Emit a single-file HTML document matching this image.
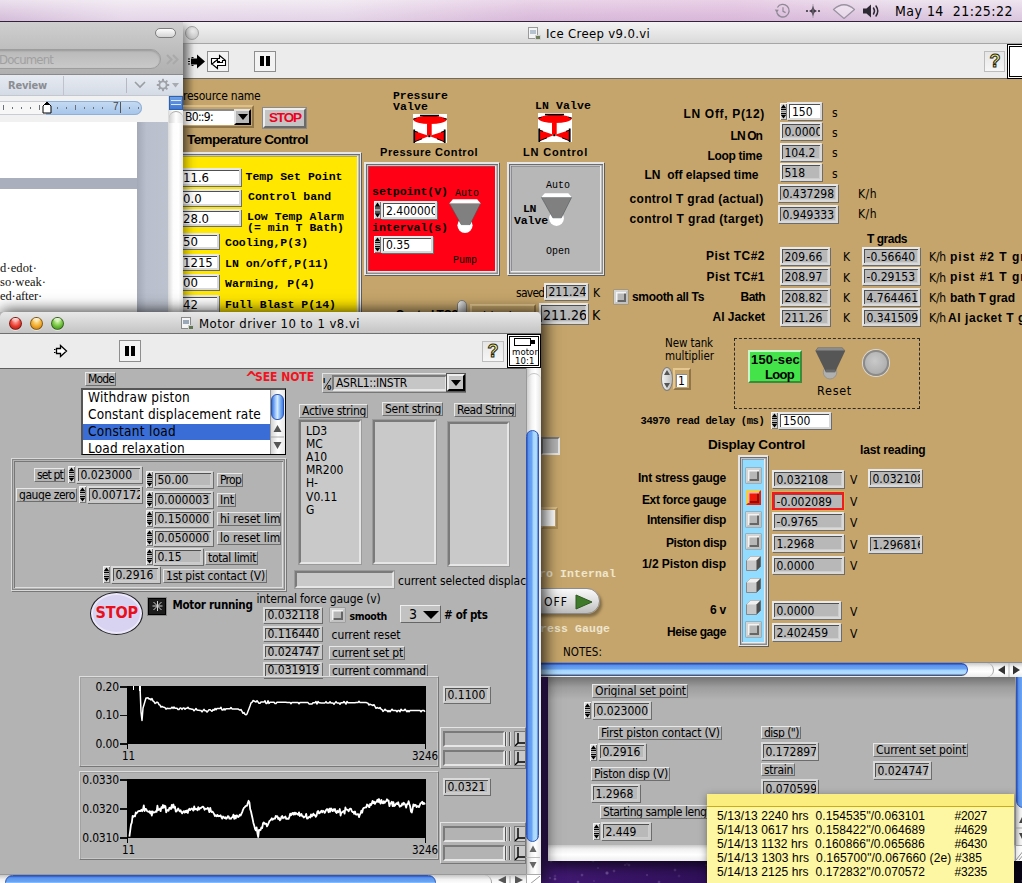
<!DOCTYPE html>
<html lang="en"><head><meta charset="utf-8"><title>Ice Creep v9.0.vi</title>
<style>
html,body{margin:0;padding:0}
body{width:1022px;height:883px;overflow:hidden;position:relative;background:#2c1445;font-family:"DejaVu Sans Condensed","Liberation Sans","DejaVu Sans",sans-serif;font-size:12px;color:#000}
*{box-sizing:border-box}
.a{position:absolute}
.t{position:absolute;white-space:pre;line-height:1}
.lg{font-family:"DejaVu Sans Condensed","Liberation Sans","DejaVu Sans",sans-serif}
.ar{font-family:"Liberation Sans",sans-serif}
.mono{font-family:"DejaVu Sans Mono","Liberation Mono",monospace;font-weight:bold}
.b{font-weight:bold}
/* desktop */
#desk{left:0;top:0;width:1022px;height:883px;background:radial-gradient(circle at 706px 865px,rgba(220,200,255,0.18) 0,rgba(220,200,255,0) 1.6px),radial-gradient(circle at 728px 879px,rgba(220,200,255,0.16) 0,rgba(220,200,255,0) 2.2px),radial-gradient(circle at 755px 863px,rgba(220,200,255,0.34) 0,rgba(220,200,255,0) 1.6px),radial-gradient(circle at 964px 879px,rgba(220,200,255,0.37) 0,rgba(220,200,255,0) 1.6px),radial-gradient(circle at 836px 879px,rgba(220,200,255,0.49) 0,rgba(220,200,255,0) 1.6px),radial-gradient(circle at 826px 870px,rgba(220,200,255,0.20) 0,rgba(220,200,255,0) 1.6px),radial-gradient(circle at 833px 870px,rgba(220,200,255,0.19) 0,rgba(220,200,255,0) 1.8px),radial-gradient(circle at 731px 864px,rgba(220,200,255,0.35) 0,rgba(220,200,255,0) 1.8px),radial-gradient(circle at 795px 878px,rgba(220,200,255,0.42) 0,rgba(220,200,255,0) 2.2px),radial-gradient(circle at 840px 872px,rgba(220,200,255,0.24) 0,rgba(220,200,255,0) 1.8px),radial-gradient(circle at 898px 863px,rgba(220,200,255,0.33) 0,rgba(220,200,255,0) 1.8px),radial-gradient(circle at 914px 875px,rgba(220,200,255,0.19) 0,rgba(220,200,255,0) 2.2px),radial-gradient(circle at 625px 865px,rgba(220,200,255,0.30) 0,rgba(220,200,255,0) 1.6px),radial-gradient(circle at 932px 879px,rgba(220,200,255,0.27) 0,rgba(220,200,255,0) 1.8px),radial-gradient(circle at 845px 879px,rgba(220,200,255,0.17) 0,rgba(220,200,255,0) 1.6px),radial-gradient(circle at 679px 876px,rgba(220,200,255,0.17) 0,rgba(220,200,255,0) 1.8px),radial-gradient(circle at 872px 882px,rgba(220,200,255,0.25) 0,rgba(220,200,255,0) 2.2px),radial-gradient(circle at 995px 882px,rgba(220,200,255,0.48) 0,rgba(220,200,255,0) 1.8px),radial-gradient(circle at 627px 864px,rgba(220,200,255,0.17) 0,rgba(220,200,255,0) 1.8px),radial-gradient(circle at 607px 873px,rgba(220,200,255,0.47) 0,rgba(220,200,255,0) 2.2px),radial-gradient(circle at 582px 875px,rgba(220,200,255,0.34) 0,rgba(220,200,255,0) 1.8px),radial-gradient(circle at 960px 878px,rgba(220,200,255,0.40) 0,rgba(220,200,255,0) 1.8px),radial-gradient(circle at 890px 873px,rgba(220,200,255,0.18) 0,rgba(220,200,255,0) 1.8px),radial-gradient(circle at 659px 882px,rgba(220,200,255,0.32) 0,rgba(220,200,255,0) 1.8px),radial-gradient(circle at 675px 870px,rgba(220,200,255,0.30) 0,rgba(220,200,255,0) 1.8px),radial-gradient(circle at 853px 879px,rgba(220,200,255,0.39) 0,rgba(220,200,255,0) 1.6px),radial-gradient(circle at 774px 878px,rgba(220,200,255,0.29) 0,rgba(220,200,255,0) 2.2px),radial-gradient(circle at 594px 881px,rgba(220,200,255,0.17) 0,rgba(220,200,255,0) 1.6px),radial-gradient(circle at 647px 875px,rgba(220,200,255,0.27) 0,rgba(220,200,255,0) 1.6px),radial-gradient(circle at 593px 861px,rgba(220,200,255,0.34) 0,rgba(220,200,255,0) 1.8px),radial-gradient(circle at 855px 861px,rgba(220,200,255,0.36) 0,rgba(220,200,255,0) 1.8px),radial-gradient(circle at 865px 872px,rgba(220,200,255,0.32) 0,rgba(220,200,255,0) 1.6px),radial-gradient(circle at 975px 875px,rgba(220,200,255,0.32) 0,rgba(220,200,255,0) 1.6px),radial-gradient(circle at 614px 871px,rgba(220,200,255,0.32) 0,rgba(220,200,255,0) 1.8px),radial-gradient(circle at 805px 867px,rgba(220,200,255,0.20) 0,rgba(220,200,255,0) 1.6px),radial-gradient(circle at 929px 877px,rgba(220,200,255,0.39) 0,rgba(220,200,255,0) 1.8px),radial-gradient(circle at 806px 866px,rgba(220,200,255,0.42) 0,rgba(220,200,255,0) 1.8px),radial-gradient(circle at 866px 868px,rgba(220,200,255,0.43) 0,rgba(220,200,255,0) 2.2px),radial-gradient(circle at 919px 867px,rgba(220,200,255,0.27) 0,rgba(220,200,255,0) 1.6px),radial-gradient(circle at 555px 876px,rgba(220,200,255,0.22) 0,rgba(220,200,255,0) 1.8px),radial-gradient(circle at 769px 872px,rgba(220,200,255,0.23) 0,rgba(220,200,255,0) 1.8px),radial-gradient(circle at 781px 867px,rgba(220,200,255,0.32) 0,rgba(220,200,255,0) 1.6px),radial-gradient(circle at 786px 881px,rgba(220,200,255,0.44) 0,rgba(220,200,255,0) 1.6px),radial-gradient(circle at 1006px 873px,rgba(220,200,255,0.32) 0,rgba(220,200,255,0) 1.8px),radial-gradient(circle at 763px 881px,rgba(220,200,255,0.43) 0,rgba(220,200,255,0) 2.2px),radial-gradient(circle at 778px 873px,rgba(220,200,255,0.21) 0,rgba(220,200,255,0) 1.8px),radial-gradient(circle at 555px 879px,rgba(220,200,255,0.43) 0,rgba(220,200,255,0) 1.8px),radial-gradient(circle at 854px 876px,rgba(220,200,255,0.20) 0,rgba(220,200,255,0) 1.8px),radial-gradient(circle at 551px 861px,rgba(220,200,255,0.33) 0,rgba(220,200,255,0) 1.8px),radial-gradient(circle at 763px 867px,rgba(220,200,255,0.24) 0,rgba(220,200,255,0) 1.8px),radial-gradient(circle at 797px 879px,rgba(220,200,255,0.24) 0,rgba(220,200,255,0) 2.2px),radial-gradient(circle at 968px 862px,rgba(220,200,255,0.46) 0,rgba(220,200,255,0) 2.2px),radial-gradient(circle at 964px 877px,rgba(220,200,255,0.33) 0,rgba(220,200,255,0) 1.6px),radial-gradient(circle at 987px 875px,rgba(220,200,255,0.42) 0,rgba(220,200,255,0) 1.8px),radial-gradient(circle at 629px 865px,rgba(220,200,255,0.34) 0,rgba(220,200,255,0) 1.8px),radial-gradient(circle at 890px 877px,rgba(220,200,255,0.42) 0,rgba(220,200,255,0) 1.6px),radial-gradient(circle at 993px 878px,rgba(220,200,255,0.22) 0,rgba(220,200,255,0) 1.6px),radial-gradient(circle at 936px 877px,rgba(220,200,255,0.35) 0,rgba(220,200,255,0) 1.6px),radial-gradient(circle at 767px 871px,rgba(220,200,255,0.39) 0,rgba(220,200,255,0) 2.2px),radial-gradient(circle at 801px 878px,rgba(220,200,255,0.39) 0,rgba(220,200,255,0) 1.8px),radial-gradient(circle at 1013px 867px,rgba(220,200,255,0.20) 0,rgba(220,200,255,0) 1.6px),radial-gradient(circle at 741px 875px,rgba(220,200,255,0.38) 0,rgba(220,200,255,0) 2.2px),radial-gradient(circle at 578px 882px,rgba(220,200,255,0.42) 0,rgba(220,200,255,0) 1.8px),radial-gradient(circle at 1022px 881px,rgba(220,200,255,0.20) 0,rgba(220,200,255,0) 1.8px),radial-gradient(circle at 780px 864px,rgba(220,200,255,0.46) 0,rgba(220,200,255,0) 1.8px),radial-gradient(circle at 882px 866px,rgba(220,200,255,0.50) 0,rgba(220,200,255,0) 2.2px),radial-gradient(circle at 714px 867px,rgba(220,200,255,0.26) 0,rgba(220,200,255,0) 1.8px),radial-gradient(circle at 550px 878px,rgba(220,200,255,0.30) 0,rgba(220,200,255,0) 1.6px),radial-gradient(circle at 737px 877px,rgba(220,200,255,0.33) 0,rgba(220,200,255,0) 1.6px),radial-gradient(circle at 598px 868px,rgba(220,200,255,0.24) 0,rgba(220,200,255,0) 1.6px),linear-gradient(90deg,#46207a 0%,#46207a 52.9%,#411a72 53.6%,#3a1568 60%,#2f1058 70%,#200b40 82%,#120828 93%,#0a0616 100%)}
/* menubar */
#menubar{left:0;top:0;width:1022px;height:22px;background:linear-gradient(90deg,rgba(255,255,255,0) 0,rgba(255,255,255,.38) 12%,rgba(255,255,255,.34) 33%,rgba(228,170,216,.22) 52%,rgba(228,170,216,.3) 72%,rgba(255,255,255,.08) 88%,rgba(255,255,255,.15) 100%),linear-gradient(180deg,#ebe1ed 0%,#e1cfe4 45%,#d4bcd9 100%);border-bottom:1px solid #33223a}
/* generic window */
.win{position:absolute;overflow:hidden}
.titlebar{position:absolute;left:0;top:0;right:0;height:22px;background:linear-gradient(180deg,#ebebeb 0%,#d8d8d8 100%);border-bottom:1px solid #a0a0a0}
.toolbar{position:absolute;left:0;right:0;background:#ececec}
/* LabVIEW widgets */
.ind{position:absolute;background:#b8b8b8;border:2px solid;border-color:#e9e9e9 #d9d9d9 #d9d9d9 #e9e9e9;box-shadow:inset 1px 1px 0 #505050,inset -1px -1px 0 #cdcdcd,1px 1px 0 #6c6c6c;font-size:12px;line-height:1;padding:2px 0 0 2.5px;white-space:pre;overflow:hidden}
.ctl{position:absolute;background:#fff;border:2px solid;border-color:#e9e9e9 #d9d9d9 #d9d9d9 #e9e9e9;box-shadow:inset 1px 1px 0 #505050,1px 1px 0 #6c6c6c;font-size:12px;line-height:1;padding:2px 0 0 3px;white-space:pre;overflow:hidden}
.cap{position:absolute;background:#b4b4b4;border:1px solid;border-color:#e8e8e8 #6e6e6e #6e6e6e #e8e8e8;font-size:12px;line-height:1;padding:1px 2px 0 2px;white-space:pre;overflow:hidden}
.spin{position:absolute;width:7px;height:17px}
.mb{font-family:"Liberation Mono","DejaVu Sans Mono",monospace;font-weight:bold;font-size:11.5px;position:absolute;white-space:pre;line-height:1}
.mr{font-family:"Liberation Mono","DejaVu Sans Mono",monospace;font-size:10px;position:absolute;white-space:pre;line-height:1}
.gb{font-family:"Liberation Sans","DejaVu Sans",sans-serif;font-weight:bold;font-size:11.5px;position:absolute;white-space:pre;line-height:1;letter-spacing:.6px}
.lb{font-family:"Liberation Sans",sans-serif;font-weight:bold;position:absolute;white-space:pre;line-height:1}
.frame{position:absolute;border:1px solid #d9d9d9;box-shadow:inset 1px 1px 0 #868686,inset -1px -1px 0 #868686,inset 2px 2px 0 #b3b3b3,inset -2px -2px 0 #b3b3b3,inset 3px 3px 0 #777,inset -3px -3px 0 #dedede,1px 1px 0 #777}
.cframe{position:absolute;border:1px solid;border-color:#dedede #777 #777 #dedede;box-shadow:inset 1px 1px 0 #a2a2a2,inset -1px -1px 0 #c8c8c8}
.chk{position:absolute;background:#b7b7b7;border:2px solid;border-color:#d4d4d4 #c2c2c2 #c2c2c2 #d4d4d4;box-shadow:inset 1.5px 1.5px 0 #f4f4f4,inset -2px -2px 0 #666,0 0 0 .5px #8a8a8a}
.gframe{position:absolute;border:solid #e6e6e6;border-width:2px 1px 1px 2px;box-shadow:inset 1px 1px 0 #6c6c6c,inset -1.5px -1.5px 0 #8c8c8c,inset 2px 2px 0 #c4c4c8,inset -3px -3px 0 #ececec,inset 2.6px 2.6px 0 #70707a,1px 1px 0 #5e5e5e}
#motor .ind,#lower .ind{border-color:#dadada #cacaca #cacaca #dadada;background:#b9b9b9}

</style></head>
<body>
<div id="desk" class="a"></div>
<div id="lower" class="win" style="left:548px;top:600px;width:474px;height:261px;background:#b3b3b3;overflow:visible;box-shadow:0 5px 12px rgba(0,0,0,.7)">
<div class="a" style="left:0px;top:77px;width:474px;height:23px;background:linear-gradient(180deg,rgba(0,0,0,.36),rgba(0,0,0,.12) 45%,rgba(0,0,0,0))"></div>
<div class="cap" style="left:44px;top:84px;width:96px;height:14px;padding:0"><div class="t" style="left:2px;top:0px;font-size:12px;font-family:'DejaVu Sans Condensed','Liberation Sans','DejaVu Sans',sans-serif;letter-spacing:-0.12px;">Original set point</div></div>
<svg class="spin" style="left:36px;top:102px;height:17px" viewBox="0 0 7 17"><rect x="0" y="0" width="7" height="17" fill="#d6d6d6"/><path d="M0 8.5 H7 M6.5 0 V17 M0 16.5 H7" stroke="#777" stroke-width="1" fill="none"/><path d="M0.5 17 V0.5 H7" stroke="#f4f4f4" stroke-width="1" fill="none"/><path d="M3.5 1.5 L6.3 5.3 L0.7 5.3 Z" fill="#000"/><rect x="1" y="5.9" width="5" height="1.2" fill="#000"/><path d="M3.5 15.5 L6.3 11.7 L0.7 11.7 Z" fill="#000"/><rect x="1" y="9.9" width="5" height="1.2" fill="#000"/></svg>
<div class="ind" style="left:44px;top:101px;width:59px;height:18px;padding-top:2px;">0.023000</div>
<div class="cap" style="left:50px;top:126px;width:124px;height:14px;padding:0"><div class="t" style="left:2px;top:0px;font-size:12px;font-family:'DejaVu Sans Condensed','Liberation Sans','DejaVu Sans',sans-serif;letter-spacing:-0.14px;">First piston contact (V)</div></div>
<svg class="spin" style="left:42px;top:144px;height:17px" viewBox="0 0 7 17"><rect x="0" y="0" width="7" height="17" fill="#d6d6d6"/><path d="M0 8.5 H7 M6.5 0 V17 M0 16.5 H7" stroke="#777" stroke-width="1" fill="none"/><path d="M0.5 17 V0.5 H7" stroke="#f4f4f4" stroke-width="1" fill="none"/><path d="M3.5 1.5 L6.3 5.3 L0.7 5.3 Z" fill="#000"/><rect x="1" y="5.9" width="5" height="1.2" fill="#000"/><path d="M3.5 15.5 L6.3 11.7 L0.7 11.7 Z" fill="#000"/><rect x="1" y="9.9" width="5" height="1.2" fill="#000"/></svg>
<div class="ind" style="left:50px;top:143px;width:48px;height:17px;padding-top:1px;">0.2916</div>
<div class="cap" style="left:43px;top:167px;width:79px;height:14px;padding:0"><div class="t" style="left:2px;top:0px;font-size:12px;font-family:'DejaVu Sans Condensed','Liberation Sans','DejaVu Sans',sans-serif;letter-spacing:-0.24px;">Piston disp (V)</div></div>
<div class="ind" style="left:43px;top:184px;width:49px;height:18px;padding-top:2px;">1.2968</div>
<div class="cap" style="left:52px;top:205px;width:140px;height:14px;padding:0"><div class="t" style="left:2px;top:0px;font-size:12px;font-family:'DejaVu Sans Condensed','Liberation Sans','DejaVu Sans',sans-serif;letter-spacing:-0.45px">Starting sample length (in)</div></div>
<svg class="spin" style="left:45px;top:223px;height:17px" viewBox="0 0 7 17"><rect x="0" y="0" width="7" height="17" fill="#d6d6d6"/><path d="M0 8.5 H7 M6.5 0 V17 M0 16.5 H7" stroke="#777" stroke-width="1" fill="none"/><path d="M0.5 17 V0.5 H7" stroke="#f4f4f4" stroke-width="1" fill="none"/><path d="M3.5 1.5 L6.3 5.3 L0.7 5.3 Z" fill="#000"/><rect x="1" y="5.9" width="5" height="1.2" fill="#000"/><path d="M3.5 15.5 L6.3 11.7 L0.7 11.7 Z" fill="#000"/><rect x="1" y="9.9" width="5" height="1.2" fill="#000"/></svg>
<div class="ind" style="left:53px;top:222px;width:50px;height:18px;padding-top:2px;">2.449</div>
<div class="cap" style="left:213px;top:126px;width:40px;height:13px;padding:0"><div class="t" style="left:2px;top:-0.5px;font-size:12px;font-family:'DejaVu Sans Condensed','Liberation Sans','DejaVu Sans',sans-serif;letter-spacing:-0.52px;">disp (")</div></div>
<div class="ind" style="left:213px;top:142px;width:57px;height:18px;padding-top:2px;">0.172897</div>
<div class="cap" style="left:213px;top:163px;width:34px;height:13px;padding:0"><div class="t" style="left:2px;top:-0.5px;font-size:12px;font-family:'DejaVu Sans Condensed','Liberation Sans','DejaVu Sans',sans-serif;letter-spacing:-0.29px;">strain</div></div>
<div class="ind" style="left:213px;top:179px;width:57px;height:18px;padding-top:2px;">0.070599</div>
<div class="cap" style="left:325px;top:143px;width:95px;height:14px;padding:0"><div class="t" style="left:2px;top:0px;font-size:12px;font-family:'DejaVu Sans Condensed','Liberation Sans','DejaVu Sans',sans-serif;letter-spacing:-0.08px;">Current set point</div></div>
<div class="ind" style="left:325px;top:161px;width:58px;height:18px;padding-top:2px;">0.024747</div>
<div class="a" style="left:0px;top:245px;width:467px;height:16px;background:linear-gradient(180deg,#c9c9c9 0%,#f0f0f0 25%,#fff 60%,#eee 100%)"></div>
<div class="a" style="left:467px;top:77px;width:15px;height:184px;background:linear-gradient(90deg,#c6c6c6,#f2f2f2 30%,#fff 60%,#e6e6e6);border-left:1px solid #999"></div>
<div class="a" style="left:468px;top:70px;width:14px;height:138px;border-radius:7px;background:linear-gradient(90deg,#2f55c4 0%,#5b93ec 14%,#6aa6f4 45%,#a4d4ff 56%,#b5e0ff 85%,#4a7fe0 100%);border:1px solid #2c55b4"></div>
<svg class="a" style="left:468px;top:212px" width="14" height="32"><path d="M7 3 L11 11 L3 11Z M7 29 L11 21 L3 21Z" fill="#444"/><rect x="0" y="15.5" width="14" height="1" fill="#aaa"/></svg>
<div class="a" style="left:467px;top:245px;width:15px;height:16px;background:#fff;border-left:1px solid #aaa;border-top:1px solid #aaa"></div>
<svg class="a" style="left:468px;top:248px" width="8" height="12"><path d="M0 12 L8 2 M3 12 L8 6" stroke="#999" stroke-width="1"/></svg>
</div>
<div id="ice" class="win" style="left:183px;top:22px;width:839px;height:655px;background:#c5a56b">
<div class="titlebar" style="background:linear-gradient(180deg,#f3f3f3 0%,#e7e7e7 50%,#dadada 100%);border-bottom:1px solid #a6a6a6"></div>
<div class="a" style="left:2px;top:4px;width:14px;height:14px;border-radius:50%;background:radial-gradient(circle at 50% 35%,#f4f4f4,#cfcfcf 70%,#b5b5b5);border:1px solid #a4a4a4"></div>
<div class="a" style="left:345px;top:5px;width:10px;height:12px;background:#f4f4f4;border:1px solid #9a9a9a"></div>
<div class="a" style="left:347px;top:8px;width:6px;height:4px;background:#b7c2cf"></div>
<div class="a" style="left:352px;top:13px;width:6px;height:5px;background:#6e7f5a;border:1px solid #d0d0d0"></div>
<div class="t" style="left:363px;top:4.5px;font-size:13px;font-family:'DejaVu Sans Condensed','Liberation Sans','DejaVu Sans',sans-serif;letter-spacing:0.33px;">Ice Creep v9.0.vi</div>
<div class="toolbar" style="top:22px;height:35px;border-bottom:1px solid #6b6b6b;background:#ececec"></div>
<svg class="a" style="left:5px;top:32px" width="18" height="15" viewBox="0 0 18 15"><path d="M3 4.5 L9 4.5 L9 0.5 L17 7.5 L9 14.5 L9 10.5 L3 10.5 Z" fill="#000"/><path d="M0 5 h2 M0 7.5 h2 M0 10 h2 M3.5 3.5 h2 M3.5 11.5 h2" stroke="#000" stroke-width="1.2"/></svg>
<div class="a" style="left:24px;top:29px;width:22px;height:21px;background:#f3f3f3;border:1px solid #8e8e8e"></div>
<svg class="a" style="left:26px;top:32px" width="19" height="16" viewBox="0 0 19 16"><path d="M2.5 10 L2.5 4.5 L10.5 4.5 L10.5 1.5 L16 6 L10.5 10.5 L10.5 7.5 L5.5 7.5 L5.5 10 Z" fill="#fff" stroke="#000" stroke-width="1.1"/><path d="M16.5 6.5 L16.5 11.5 L8.5 11.5 L8.5 14.5 L3 10 L8.5 5.5 L8.5 8.5 L13.5 8.5 L13.5 6.5 Z" fill="#fff" stroke="#000" stroke-width="1.1"/></svg>
<div class="a" style="left:71px;top:29px;width:22px;height:21px;background:#f3f3f3;border:1px solid #8e8e8e"></div>
<div class="a" style="left:77px;top:34px;width:4px;height:10px;background:#000"></div>
<div class="a" style="left:83px;top:34px;width:4px;height:10px;background:#000"></div>
<div class="a" style="left:801px;top:29px;width:21px;height:21px;background:linear-gradient(180deg,#e6e6e6,#f6f6f6);border:1px solid #bdbdbd"></div>
<div class="t" style="left:806.5px;top:30px;font-size:18px;font-family:'Liberation Sans',sans-serif;font-weight:bold;letter-spacing:0.00px;color:#f4ee6a;-webkit-text-stroke:1px #222">?</div>
<div class="a" style="left:824px;top:22px;width:34px;height:35px;background:#fff;border:1px solid #000;box-shadow:inset 0 0 0 1px #fff,inset 0 0 0 2px #000"></div>
<div class="a" style="left:0px;top:22px;width:11px;height:276px;background:linear-gradient(90deg,rgba(0,0,0,.28),rgba(0,0,0,0))"></div>
<div class="t" style="left:0px;top:67.5px;font-size:12px;font-family:'DejaVu Sans Condensed','Liberation Sans','DejaVu Sans',sans-serif;letter-spacing:-0.25px;">resource name</div>
<div class="a" style="left:-8px;top:83px;width:79px;height:23px;background:#c5a56b;border:2px solid;border-color:#dcc08c #8f7547 #8f7547 #dcc08c"></div>
<div class="a" style="left:-8px;top:87px;width:59px;height:16px;background:#fff;border-top:2px solid #8a8a8a"></div>
<div class="t" style="left:2px;top:89px;font-size:12px;font-family:'DejaVu Sans Condensed','Liberation Sans','DejaVu Sans',sans-serif;letter-spacing:-0.68px;">B0::9:</div>
<div class="a" style="left:51px;top:87px;width:17px;height:16px;background:#b8b8b8;border:2px solid;border-color:#e4e4e4 #000 #000 #e4e4e4"></div>
<svg class="a" style="left:55px;top:92px" width="10" height="6"><path d="M0 0 L10 0 L5 6 Z" fill="#000"/></svg>
<div class="a" style="left:80px;top:86px;width:43px;height:20px;background:#c4c4c4;border:2px solid;border-color:#eee #6a6a6a #6a6a6a #eee;outline:1px solid #8a8a8a"></div>
<div class="t" style="left:86px;top:89.25px;font-size:13.5px;font-family:'Liberation Sans',sans-serif;font-weight:bold;letter-spacing:-1.13px;color:#f0001c">STOP</div>
<div class="t" style="left:4px;top:111.25px;font-size:13.5px;font-family:'Liberation Sans',sans-serif;font-weight:bold;letter-spacing:-0.61px;">Temperature Control</div>
<div class="gframe" style="left:-13px;top:130px;width:191px;height:178px;background:#ffe700"></div>
<div class="ctl" style="left:-13px;top:146px;width:71px;height:18px;padding-top:2px;border-width:2px"></div>
<div class="t" style="left:0px;top:149px;font-size:13px;font-family:'DejaVu Sans Condensed','Liberation Sans','DejaVu Sans',sans-serif;letter-spacing:0.00px;">11.6</div>
<div class="t" style="right:838.5px;top:149px;font-size:13px;font-family:'DejaVu Sans Condensed','Liberation Sans','DejaVu Sans',sans-serif;letter-spacing:0px;">2</div>
<div class="t" style="left:62.5px;top:149.25px;font-size:11.5px;font-family:'Liberation Mono','DejaVu Sans Mono',monospace;font-weight:bold;letter-spacing:0.03px;">Temp Set Point</div>
<div class="ctl" style="left:-13px;top:167px;width:71px;height:17px;padding-top:1px;border-width:2px"></div>
<div class="t" style="left:0px;top:169.5px;font-size:13px;font-family:'DejaVu Sans Condensed','Liberation Sans','DejaVu Sans',sans-serif;letter-spacing:0.00px;">0.0</div>
<div class="t" style="right:838.5px;top:169.5px;font-size:13px;font-family:'DejaVu Sans Condensed','Liberation Sans','DejaVu Sans',sans-serif;letter-spacing:0px;">0</div>
<div class="t" style="left:65px;top:169.25px;font-size:11.5px;font-family:'Liberation Mono','DejaVu Sans Mono',monospace;font-weight:bold;letter-spacing:0.02px;">Control band</div>
<div class="ctl" style="left:-13px;top:187px;width:71px;height:17px;padding-top:1px;border-width:2px"></div>
<div class="t" style="left:0px;top:189.5px;font-size:13px;font-family:'DejaVu Sans Condensed','Liberation Sans','DejaVu Sans',sans-serif;letter-spacing:0.00px;">28.0</div>
<div class="t" style="right:838.5px;top:189.5px;font-size:13px;font-family:'DejaVu Sans Condensed','Liberation Sans','DejaVu Sans',sans-serif;letter-spacing:0px;">1</div>
<div class="t" style="left:64px;top:189.25px;font-size:11.5px;font-family:'Liberation Mono','DejaVu Sans Mono',monospace;font-weight:bold;letter-spacing:0.03px;">Low Temp Alarm</div>
<div class="ctl" style="left:-13px;top:211px;width:49px;height:16px;padding-top:0px;border-width:2px"></div>
<div class="t" style="left:0px;top:213px;font-size:13px;font-family:'DejaVu Sans Condensed','Liberation Sans','DejaVu Sans',sans-serif;letter-spacing:0.00px;">50</div>
<div class="t" style="right:838.5px;top:213px;font-size:13px;font-family:'DejaVu Sans Condensed','Liberation Sans','DejaVu Sans',sans-serif;letter-spacing:0px;">1</div>
<div class="t" style="left:42px;top:214.75px;font-size:11.5px;font-family:'Liberation Mono','DejaVu Sans Mono',monospace;font-weight:bold;letter-spacing:0.02px;">Cooling,P(3)</div>
<div class="ctl" style="left:-13px;top:232px;width:49px;height:16px;padding-top:0px;border-width:2px"></div>
<div class="t" style="left:0px;top:234px;font-size:13px;font-family:'DejaVu Sans Condensed','Liberation Sans','DejaVu Sans',sans-serif;letter-spacing:0.00px;">1215</div>
<div class="t" style="right:838.5px;top:234px;font-size:13px;font-family:'DejaVu Sans Condensed','Liberation Sans','DejaVu Sans',sans-serif;letter-spacing:0px;">1</div>
<div class="t" style="left:42px;top:235.75px;font-size:11.5px;font-family:'Liberation Mono','DejaVu Sans Mono',monospace;font-weight:bold;letter-spacing:0.03px;">LN on/off,P(11)</div>
<div class="ctl" style="left:-13px;top:252px;width:49px;height:16px;padding-top:0px;border-width:2px"></div>
<div class="t" style="left:0px;top:254px;font-size:13px;font-family:'DejaVu Sans Condensed','Liberation Sans','DejaVu Sans',sans-serif;letter-spacing:0.00px;">00</div>
<div class="t" style="right:838.5px;top:254px;font-size:13px;font-family:'DejaVu Sans Condensed','Liberation Sans','DejaVu Sans',sans-serif;letter-spacing:0px;">1</div>
<div class="t" style="left:42px;top:256.25px;font-size:11.5px;font-family:'Liberation Mono','DejaVu Sans Mono',monospace;font-weight:bold;letter-spacing:0.02px;">Warming, P(4)</div>
<div class="ctl" style="left:-13px;top:273px;width:49px;height:17px;padding-top:1px;border-width:2px"></div>
<div class="t" style="left:0px;top:275.5px;font-size:13px;font-family:'DejaVu Sans Condensed','Liberation Sans','DejaVu Sans',sans-serif;letter-spacing:0.00px;">42</div>
<div class="t" style="right:838.5px;top:275.5px;font-size:13px;font-family:'DejaVu Sans Condensed','Liberation Sans','DejaVu Sans',sans-serif;letter-spacing:0px;">1</div>
<div class="t" style="left:42px;top:277.25px;font-size:11.5px;font-family:'Liberation Mono','DejaVu Sans Mono',monospace;font-weight:bold;letter-spacing:0.04px;">Full Blast P(14)</div>
<div class="t" style="left:64px;top:199.75px;font-size:11.5px;font-family:'Liberation Mono','DejaVu Sans Mono',monospace;font-weight:bold;letter-spacing:0.03px;">(= min T Bath)</div>
<div class="t" style="left:210px;top:68.25px;font-size:11.5px;font-family:'Liberation Mono','DejaVu Sans Mono',monospace;font-weight:bold;letter-spacing:-0.03px;">Pressure</div>
<div class="t" style="left:210px;top:78.75px;font-size:11.5px;font-family:'Liberation Mono','DejaVu Sans Mono',monospace;font-weight:bold;letter-spacing:0.10px;">Valve</div>
<svg class="a" style="left:230px;top:92px" width="34" height="29" viewBox="0 0 34 29"><rect width="34" height="29" fill="#fff"/><ellipse cx="17" cy="5.8" rx="16.6" ry="4.1" fill="#ff0000"/><path d="M7 1.6 H26" stroke="#000" stroke-width="1.6"/><path d="M0 5.2 L3.5 4.2 M34 5.2 L30.5 4.2" stroke="#000" stroke-width="1"/><rect x="14" y="9.5" width="4.7" height="12" fill="#ff0000"/><path d="M2 17.3 L16.3 22 L2 27.6 Z M31 17.3 L16.3 22 L31 27.6 Z" fill="#ff0000"/><rect x="0.3" y="15.5" width="1.8" height="13.5" fill="#000"/><rect x="30.8" y="15.5" width="1.8" height="13.5" fill="#000"/><path d="M2 27.6 L9 24.8 M31 27.6 L24 24.8 M2 17.3 L5 18.3 M31 17.3 L28 18.3" stroke="#000" stroke-width="1"/><rect x="15.3" y="21.2" width="2" height="2" fill="#000"/></svg>
<div class="t" style="left:197px;top:125px;font-size:11px;font-family:'Liberation Sans',sans-serif;font-weight:bold;letter-spacing:0.55px;">Pressure Control</div>
<div class="gframe" style="left:181px;top:140px;width:135px;height:113px;background:#ff0014"></div>
<div class="t" style="left:189px;top:163.75px;font-size:11.5px;font-family:'Liberation Mono','DejaVu Sans Mono',monospace;font-weight:bold;letter-spacing:0.01px;">setpoint(V)</div>
<div class="t" style="left:272px;top:166.5px;font-size:10px;font-family:'Liberation Mono','DejaVu Sans Mono',monospace;letter-spacing:-0.00px;">Auto</div>
<svg class="spin" style="left:191px;top:179px;height:18px" viewBox="0 0 7 18"><rect x="0" y="0" width="7" height="18" fill="#d6d6d6"/><path d="M0 9.0 H7 M6.5 0 V18 M0 17.5 H7" stroke="#777" stroke-width="1" fill="none"/><path d="M0.5 18 V0.5 H7" stroke="#f4f4f4" stroke-width="1" fill="none"/><path d="M3.5 1.5 L6.3 5.8 L0.7 5.8 Z" fill="#000"/><rect x="1" y="6.4" width="5" height="1.2" fill="#000"/><path d="M3.5 16.5 L6.3 12.2 L0.7 12.2 Z" fill="#000"/><rect x="1" y="10.4" width="5" height="1.2" fill="#000"/></svg>
<div class="ctl" style="left:198px;top:179px;width:56px;height:18px;padding-top:2px;">2.400000</div>
<div class="t" style="left:189px;top:199.75px;font-size:11.5px;font-family:'Liberation Mono','DejaVu Sans Mono',monospace;font-weight:bold;letter-spacing:0.01px;">interval(s)</div>
<svg class="spin" style="left:191px;top:214px;height:17px" viewBox="0 0 7 17"><rect x="0" y="0" width="7" height="17" fill="#d6d6d6"/><path d="M0 8.5 H7 M6.5 0 V17 M0 16.5 H7" stroke="#777" stroke-width="1" fill="none"/><path d="M0.5 17 V0.5 H7" stroke="#f4f4f4" stroke-width="1" fill="none"/><path d="M3.5 1.5 L6.3 5.3 L0.7 5.3 Z" fill="#000"/><rect x="1" y="5.9" width="5" height="1.2" fill="#000"/><path d="M3.5 15.5 L6.3 11.7 L0.7 11.7 Z" fill="#000"/><rect x="1" y="9.9" width="5" height="1.2" fill="#000"/></svg>
<div class="ctl" style="left:198px;top:214px;width:52px;height:17px;padding-top:1px;">0.35</div>
<div class="t" style="left:270px;top:233.5px;font-size:10px;font-family:'Liberation Mono','DejaVu Sans Mono',monospace;letter-spacing:-0.00px;">Pump</div>
<svg class="a" style="left:266px;top:177px" width="33" height="34" viewBox="0 0 33 34"><circle cx="16" cy="26.3" r="7.6" fill="#fff"/><path d="M0.4 4.4 L31.6 4.4 L21 25.6 L12.2 25.6 Z" fill="#808080" stroke="#485656" stroke-width=".6"/><path d="M3.9 0.2 L28.1 0.2 L31.8 4.4 L0.2 4.4 Z" fill="#fff"/></svg>
<div class="t" style="left:352px;top:77.75px;font-size:11.5px;font-family:'Liberation Mono','DejaVu Sans Mono',monospace;font-weight:bold;letter-spacing:0.10px;">LN Valve</div>
<svg class="a" style="left:355px;top:91px" width="34" height="29" viewBox="0 0 34 29"><rect width="34" height="29" fill="#fff"/><ellipse cx="17" cy="5.8" rx="16.6" ry="4.1" fill="#ff0000"/><path d="M7 1.6 H26" stroke="#000" stroke-width="1.6"/><path d="M0 5.2 L3.5 4.2 M34 5.2 L30.5 4.2" stroke="#000" stroke-width="1"/><rect x="14" y="9.5" width="4.7" height="12" fill="#ff0000"/><path d="M2 17.3 L16.3 22 L2 27.6 Z M31 17.3 L16.3 22 L31 27.6 Z" fill="#ff0000"/><rect x="0.3" y="15.5" width="1.8" height="13.5" fill="#000"/><rect x="30.8" y="15.5" width="1.8" height="13.5" fill="#000"/><path d="M2 27.6 L9 24.8 M31 27.6 L24 24.8 M2 17.3 L5 18.3 M31 17.3 L28 18.3" stroke="#000" stroke-width="1"/><rect x="15.3" y="21.2" width="2" height="2" fill="#000"/></svg>
<div class="t" style="left:340px;top:124.5px;font-size:11px;font-family:'Liberation Sans',sans-serif;font-weight:bold;letter-spacing:0.82px;">LN Control</div>
<div class="gframe" style="left:324px;top:140px;width:97px;height:113px;background:#b7b7b7"></div>
<div class="t" style="left:363px;top:159px;font-size:10px;font-family:'Liberation Mono','DejaVu Sans Mono',monospace;letter-spacing:-0.00px;">Auto</div>
<svg class="a" style="left:358px;top:171px" width="32" height="33" viewBox="0 0 33 34"><circle cx="16" cy="26.3" r="7.6" fill="#fff"/><path d="M0.4 4.4 L31.6 4.4 L21 25.6 L12.2 25.6 Z" fill="#808080" stroke="#485656" stroke-width=".6"/><path d="M3.9 0.2 L28.1 0.2 L31.8 4.4 L0.2 4.4 Z" fill="#fff"/></svg>
<div class="t" style="left:340px;top:181.25px;font-size:11.5px;font-family:'Liberation Mono','DejaVu Sans Mono',monospace;font-weight:bold;letter-spacing:-0.40px;">LN</div>
<div class="t" style="left:331px;top:192.75px;font-size:11.5px;font-family:'Liberation Mono','DejaVu Sans Mono',monospace;font-weight:bold;letter-spacing:-0.10px;">Valve</div>
<div class="t" style="left:363px;top:225px;font-size:10px;font-family:'Liberation Mono','DejaVu Sans Mono',monospace;letter-spacing:-0.00px;">Open</div>
<div class="t" style="left:333px;top:264.5px;font-size:12px;font-family:'DejaVu Sans Condensed','Liberation Sans','DejaVu Sans',sans-serif;letter-spacing:-0.73px;">saved</div>
<div class="ind" style="left:361px;top:261px;width:44px;height:17px;padding-top:1px;">211.24</div>
<div class="t" style="left:410px;top:264.5px;font-size:12px;font-family:'DejaVu Sans Condensed','Liberation Sans','DejaVu Sans',sans-serif;letter-spacing:0.00px;">K</div>
<div class="ind" style="left:356px;top:281px;width:49px;height:21px;padding-top:2px;font-size:14px;padding-top:3px;padding-left:2px">211.26</div>
<div class="t" style="left:409px;top:285.5px;font-size:14px;font-family:'DejaVu Sans Condensed','Liberation Sans','DejaVu Sans',sans-serif;letter-spacing:0.00px;">K</div>
<div class="t" style="left:212.5px;top:286.5px;font-size:12px;font-family:'Liberation Sans',sans-serif;font-weight:bold;letter-spacing:-0.62px;">Control TC?</div>
<div class="a" style="left:287px;top:282px;width:66px;height:22px;background:#c5a56b;border:2px solid;border-color:#e4c890 #8f7547 #8f7547 #e4c890"></div>
<div class="t" style="left:291px;top:287.5px;font-size:14px;font-family:'DejaVu Sans Condensed','Liberation Sans','DejaVu Sans',sans-serif;letter-spacing:0.03px;">Al jacket</div>
<div class="a" style="left:274px;top:278px;width:10px;height:26px;border-radius:5px;background:linear-gradient(90deg,#f4f4f4,#b0b0b0);border:1px solid #7e7e7e"></div>
<div class="t" style="left:500.5px;top:86px;font-size:12px;font-family:'Liberation Sans',sans-serif;font-weight:bold;letter-spacing:0.68px;">LN Off, P(12)</div>
<div class="t" style="left:547.5px;top:108px;font-size:12px;font-family:'Liberation Sans',sans-serif;font-weight:bold;letter-spacing:-0.90px;">LN On</div>
<div class="t" style="left:524.5px;top:128px;font-size:12px;font-family:'Liberation Sans',sans-serif;font-weight:bold;letter-spacing:-0.31px;">Loop time</div>
<div class="t" style="left:461.5px;top:146.5px;font-size:12px;font-family:'Liberation Sans',sans-serif;font-weight:bold;letter-spacing:-0.00px;">LN  off elapsed time</div>
<div class="t" style="left:446.5px;top:170.5px;font-size:12px;font-family:'Liberation Sans',sans-serif;font-weight:bold;letter-spacing:0.32px;">control T grad (actual)</div>
<div class="t" style="left:446.5px;top:190.5px;font-size:12px;font-family:'Liberation Sans',sans-serif;font-weight:bold;letter-spacing:0.38px;">control T grad (target)</div>
<svg class="spin" style="left:597px;top:81px;height:17px" viewBox="0 0 7 17"><rect x="0" y="0" width="7" height="17" fill="#d6d6d6"/><path d="M0 8.5 H7 M6.5 0 V17 M0 16.5 H7" stroke="#777" stroke-width="1" fill="none"/><path d="M0.5 17 V0.5 H7" stroke="#f4f4f4" stroke-width="1" fill="none"/><path d="M3.5 1.5 L6.3 5.3 L0.7 5.3 Z" fill="#000"/><rect x="1" y="5.9" width="5" height="1.2" fill="#000"/><path d="M3.5 15.5 L6.3 11.7 L0.7 11.7 Z" fill="#000"/><rect x="1" y="9.9" width="5" height="1.2" fill="#000"/></svg>
<div class="ctl" style="left:604px;top:80px;width:35px;height:18px;padding-top:2px;">150</div>
<div class="ind" style="left:597px;top:100px;width:42px;height:18px;padding-top:2px;">0.0000</div>
<div class="ind" style="left:597px;top:121px;width:42px;height:18px;padding-top:2px;">104.2</div>
<div class="ind" style="left:597px;top:141px;width:42px;height:18px;padding-top:2px;">518</div>
<div class="ind" style="left:595px;top:162px;width:60px;height:18px;padding-top:2px;">0.437298</div>
<div class="ind" style="left:595px;top:183px;width:60px;height:18px;padding-top:2px;">0.949333</div>
<div class="t" style="left:649px;top:85px;font-size:12px;font-family:'DejaVu Sans Condensed','Liberation Sans','DejaVu Sans',sans-serif;letter-spacing:0.00px;">s</div>
<div class="t" style="left:649px;top:105px;font-size:12px;font-family:'DejaVu Sans Condensed','Liberation Sans','DejaVu Sans',sans-serif;letter-spacing:0.00px;">s</div>
<div class="t" style="left:649px;top:125px;font-size:12px;font-family:'DejaVu Sans Condensed','Liberation Sans','DejaVu Sans',sans-serif;letter-spacing:0.00px;">s</div>
<div class="t" style="left:649px;top:146px;font-size:12px;font-family:'DejaVu Sans Condensed','Liberation Sans','DejaVu Sans',sans-serif;letter-spacing:0.00px;">s</div>
<div class="t" style="left:675px;top:165.5px;font-size:12px;font-family:'DejaVu Sans Condensed','Liberation Sans','DejaVu Sans',sans-serif;letter-spacing:0.48px;">K/h</div>
<div class="t" style="left:675px;top:186px;font-size:12px;font-family:'DejaVu Sans Condensed','Liberation Sans','DejaVu Sans',sans-serif;letter-spacing:0.48px;">K/h</div>
<div class="t" style="left:684px;top:210.5px;font-size:12px;font-family:'Liberation Sans',sans-serif;font-weight:bold;letter-spacing:-0.48px;">T grads</div>
<div class="t" style="left:523px;top:228px;font-size:12px;font-family:'Liberation Sans',sans-serif;font-weight:bold;letter-spacing:0.48px;">Pist TC#2</div>
<div class="ind" style="left:597px;top:224.5px;width:50px;height:18.0px;padding-top:2px;">209.66</div>
<div class="t" style="left:660px;top:229px;font-size:12px;font-family:'DejaVu Sans Condensed','Liberation Sans','DejaVu Sans',sans-serif;letter-spacing:0.00px;">K</div>
<div class="ind" style="left:679px;top:224.5px;width:58px;height:18.0px;padding-top:2px;">-0.56640</div>
<div class="t" style="left:746px;top:229px;font-size:12px;font-family:'DejaVu Sans Condensed','Liberation Sans','DejaVu Sans',sans-serif;letter-spacing:-0.19px;">K/h</div>
<div class="t" style="left:767px;top:228.5px;font-size:12px;font-family:'Liberation Sans',sans-serif;font-weight:bold;letter-spacing:1.00px;">pist #2 T gr</div>
<div class="t" style="left:523.5px;top:248.5px;font-size:12px;font-family:'Liberation Sans',sans-serif;font-weight:bold;letter-spacing:0.42px;">Pist TC#1</div>
<div class="ind" style="left:597px;top:245.0px;width:50px;height:18.0px;padding-top:2px;">208.97</div>
<div class="t" style="left:660px;top:249.5px;font-size:12px;font-family:'DejaVu Sans Condensed','Liberation Sans','DejaVu Sans',sans-serif;letter-spacing:0.00px;">K</div>
<div class="ind" style="left:679px;top:245.0px;width:58px;height:18.0px;padding-top:2px;">-0.29153</div>
<div class="t" style="left:746px;top:249.5px;font-size:12px;font-family:'DejaVu Sans Condensed','Liberation Sans','DejaVu Sans',sans-serif;letter-spacing:-0.19px;">K/h</div>
<div class="t" style="left:767px;top:249px;font-size:12px;font-family:'Liberation Sans',sans-serif;font-weight:bold;letter-spacing:1.00px;">pist #1 T gr</div>
<div class="t" style="left:557.5px;top:269px;font-size:12px;font-family:'Liberation Sans',sans-serif;font-weight:bold;letter-spacing:-0.54px;">Bath</div>
<div class="ind" style="left:597px;top:265.5px;width:50px;height:18.0px;padding-top:2px;">208.82</div>
<div class="t" style="left:660px;top:270px;font-size:12px;font-family:'DejaVu Sans Condensed','Liberation Sans','DejaVu Sans',sans-serif;letter-spacing:0.00px;">K</div>
<div class="ind" style="left:679px;top:265.5px;width:58px;height:18.0px;padding-top:2px;">4.764461</div>
<div class="t" style="left:746px;top:270px;font-size:12px;font-family:'DejaVu Sans Condensed','Liberation Sans','DejaVu Sans',sans-serif;letter-spacing:-0.19px;">K/h</div>
<div class="t" style="left:767px;top:269.5px;font-size:12px;font-family:'Liberation Sans',sans-serif;font-weight:bold;letter-spacing:-0.03px;">bath T grad</div>
<div class="t" style="left:529.5px;top:289px;font-size:12px;font-family:'Liberation Sans',sans-serif;font-weight:bold;letter-spacing:-0.02px;">Al Jacket</div>
<div class="ind" style="left:597px;top:285.5px;width:50px;height:18.0px;padding-top:2px;">211.26</div>
<div class="t" style="left:660px;top:290px;font-size:12px;font-family:'DejaVu Sans Condensed','Liberation Sans','DejaVu Sans',sans-serif;letter-spacing:0.00px;">K</div>
<div class="ind" style="left:679px;top:285.5px;width:58px;height:18.0px;padding-top:2px;">0.341509</div>
<div class="t" style="left:746px;top:290px;font-size:12px;font-family:'DejaVu Sans Condensed','Liberation Sans','DejaVu Sans',sans-serif;letter-spacing:-0.19px;">K/h</div>
<div class="t" style="left:765px;top:289.5px;font-size:12px;font-family:'Liberation Sans',sans-serif;font-weight:bold;letter-spacing:0.56px;">Al jacket T g</div>
<div class="chk" style="left:431px;top:268px;width:14px;height:14px;"></div>
<div class="t" style="left:449px;top:269px;font-size:12px;font-family:'Liberation Sans',sans-serif;font-weight:bold;letter-spacing:-0.34px;">smooth all Ts</div>
<div class="t" style="left:482px;top:315.75px;font-size:11.5px;font-family:'DejaVu Sans Condensed','Liberation Sans','DejaVu Sans',sans-serif;letter-spacing:-0.10px;">New tank</div>
<div class="t" style="left:482px;top:328.75px;font-size:11.5px;font-family:'DejaVu Sans Condensed','Liberation Sans','DejaVu Sans',sans-serif;letter-spacing:-0.04px;">multiplier</div>
<div class="a" style="left:478px;top:345px;width:12px;height:24px;border-radius:50%;background:linear-gradient(90deg,#f4f4f4,#bdbdbd);border:1px solid #7e7e7e"></div>
<svg class="a" style="left:481px;top:348px" width="6" height="18"><path d="M3 0 L6 5 L0 5Z M3 18 L6 13 L0 13Z" fill="#555"/></svg>
<div class="a" style="left:490px;top:346px;width:18px;height:22px;background:#c5a56b;border:2px solid;border-color:#e4c890 #8f7547 #8f7547 #e4c890"></div>
<div class="a" style="left:493px;top:352px;width:11px;height:13px;background:#fff;border-top:1px solid #8a8a8a;border-left:1px solid #8a8a8a"></div>
<div class="t" style="left:495px;top:352.5px;font-size:12px;font-family:'DejaVu Sans Condensed','Liberation Sans','DejaVu Sans',sans-serif;letter-spacing:0.00px;">1</div>
<div class="a" style="left:551px;top:316px;width:186px;height:71px;border:1px dashed #2a2a2a"></div>
<div class="a" style="left:565px;top:328px;width:54px;height:33px;background:#44e34a;border:2px solid;border-color:#c9f7c9 #3c8a3c #3c8a3c #c9f7c9"></div>
<div class="t" style="left:568px;top:330.5px;font-size:13px;font-family:'Liberation Sans',sans-serif;font-weight:bold;letter-spacing:0.18px;">150-sec</div>
<div class="t" style="left:582px;top:346px;font-size:13px;font-family:'Liberation Sans',sans-serif;font-weight:bold;letter-spacing:-0.69px;">Loop</div>
<svg class="a" style="left:632px;top:324px" width="31" height="34" viewBox="0 0 33 34"><circle cx="16" cy="26.8" r="7.2" fill="#b0b0b0" stroke="#8e8e8e" stroke-width=".8"/><path d="M3 0.6 L29 0.6 L32.2 4 L21.5 26.5 L11.5 26.5 L0.4 4 Z" fill="#565656"/><path d="M3.5 0.6 L28.5 0.6 L31.8 3.8 L0.8 3.8 Z" fill="#8c8c8c"/><rect x="11.5" y="24" width="10" height="3" fill="#6a6a6a"/></svg>
<div class="t" style="left:634px;top:363.25px;font-size:12.5px;font-family:'DejaVu Sans Condensed','Liberation Sans','DejaVu Sans',sans-serif;letter-spacing:0.73px;">Reset</div>
<div class="a" style="left:680px;top:328px;width:26px;height:26px;border-radius:50%;background:radial-gradient(circle at 45% 40%,#c9c9c9,#b0b0b0 70%);border:2px solid #8a8a8a;box-shadow:0 0 0 1px #d8d8d8"></div>
<div class="t" style="left:457.5px;top:393.75px;font-size:10.5px;font-family:'Liberation Mono','DejaVu Sans Mono',monospace;font-weight:bold;letter-spacing:-0.40px;">34970 read delay (ms)</div>
<svg class="spin" style="left:588px;top:390px;height:17px" viewBox="0 0 7 17"><rect x="0" y="0" width="7" height="17" fill="#d6d6d6"/><path d="M0 8.5 H7 M6.5 0 V17 M0 16.5 H7" stroke="#777" stroke-width="1" fill="none"/><path d="M0.5 17 V0.5 H7" stroke="#f4f4f4" stroke-width="1" fill="none"/><path d="M3.5 1.5 L6.3 5.3 L0.7 5.3 Z" fill="#000"/><rect x="1" y="5.9" width="5" height="1.2" fill="#000"/><path d="M3.5 15.5 L6.3 11.7 L0.7 11.7 Z" fill="#000"/><rect x="1" y="9.9" width="5" height="1.2" fill="#000"/></svg>
<div class="ctl" style="left:595px;top:390px;width:53px;height:17px;padding-top:1px;">1500</div>
<div class="t" style="left:525px;top:415.75px;font-size:13.5px;font-family:'Liberation Sans',sans-serif;font-weight:bold;letter-spacing:-0.18px;">Display Control</div>
<div class="t" style="left:677px;top:421.5px;font-size:12px;font-family:'Liberation Sans',sans-serif;font-weight:bold;letter-spacing:-0.15px;">last reading</div>
<div class="gframe" style="left:555px;top:433px;width:30px;height:191px;background:#92dcff"></div>
<div class="t" style="left:455px;top:450px;font-size:12px;font-family:'Liberation Sans',sans-serif;font-weight:bold;letter-spacing:-0.25px;">Int stress gauge</div>
<div class="chk" style="left:563px;top:446px;width:15px;height:15px;"></div>
<div class="ind" style="left:589px;top:448px;width:72px;height:18px;padding-top:2px;">0.032108</div>
<div class="t" style="left:667px;top:452px;font-size:12px;font-family:'DejaVu Sans Condensed','Liberation Sans','DejaVu Sans',sans-serif;letter-spacing:0.00px;">V</div>
<div class="t" style="left:459px;top:471.5px;font-size:12px;font-family:'Liberation Sans',sans-serif;font-weight:bold;letter-spacing:-0.40px;">Ext force gauge</div>
<div class="a" style="left:563px;top:468px;width:15px;height:15px;background:#f01808;border:2px solid;border-color:#f0d040 #e02010 #e02010 #f0d040;box-shadow:inset 1.5px 1.5px 0 #ffb0a0,inset -2px -2px 0 #8a1000"></div>
<div class="ind" style="left:589px;top:470px;width:72px;height:18px;padding-top:2px;border-color:#ee1c1c;box-shadow:inset 1px 1px 0 #a04040,0 0 0 .5px #e8c040;">-0.002089</div>
<div class="t" style="left:667px;top:474.1px;font-size:12px;font-family:'DejaVu Sans Condensed','Liberation Sans','DejaVu Sans',sans-serif;letter-spacing:0.00px;">V</div>
<div class="t" style="left:464px;top:492px;font-size:12px;font-family:'Liberation Sans',sans-serif;font-weight:bold;letter-spacing:-0.40px;">Intensifier disp</div>
<div class="chk" style="left:563px;top:490px;width:15px;height:15px;"></div>
<div class="ind" style="left:589px;top:490px;width:72px;height:18px;padding-top:2px;">-0.9765</div>
<div class="t" style="left:667px;top:494.5px;font-size:12px;font-family:'DejaVu Sans Condensed','Liberation Sans','DejaVu Sans',sans-serif;letter-spacing:0.00px;">V</div>
<div class="t" style="left:483px;top:514.5px;font-size:12px;font-family:'Liberation Sans',sans-serif;font-weight:bold;letter-spacing:-0.42px;">Piston disp</div>
<div class="chk" style="left:563px;top:512px;width:15px;height:15px;"></div>
<div class="ind" style="left:589px;top:512px;width:72px;height:18px;padding-top:2px;">1.2968</div>
<div class="t" style="left:667px;top:517px;font-size:12px;font-family:'DejaVu Sans Condensed','Liberation Sans','DejaVu Sans',sans-serif;letter-spacing:0.00px;">V</div>
<div class="t" style="left:459px;top:536px;font-size:12px;font-family:'Liberation Sans',sans-serif;font-weight:bold;letter-spacing:-0.05px;">1/2 Piston disp</div>
<svg class="a" style="left:563px;top:534px" width="15" height="15"><path d="M0.5 4.5 L4.5 0.5 L14.5 0.5 L14.5 10.5 L10.5 14.5 L0.5 14.5 Z" fill="#c9c9c9" stroke="#777" stroke-width=".8"/><path d="M0.5 4.5 L4.5 0.5 L14.5 0.5 L10.5 4.5 Z" fill="#f0f0f0"/><path d="M10.5 4.5 L14.5 0.5 L14.5 10.5 L10.5 14.5 Z" fill="#4e4e4e"/></svg>
<div class="ind" style="left:589px;top:534px;width:72px;height:18px;padding-top:2px;">0.0000</div>
<div class="t" style="left:667px;top:538.2px;font-size:12px;font-family:'DejaVu Sans Condensed','Liberation Sans','DejaVu Sans',sans-serif;letter-spacing:0.00px;">V</div>
<svg class="a" style="left:563px;top:556px" width="15" height="15"><path d="M0.5 4.5 L4.5 0.5 L14.5 0.5 L14.5 10.5 L10.5 14.5 L0.5 14.5 Z" fill="#c9c9c9" stroke="#777" stroke-width=".8"/><path d="M0.5 4.5 L4.5 0.5 L14.5 0.5 L10.5 4.5 Z" fill="#f0f0f0"/><path d="M10.5 4.5 L14.5 0.5 L14.5 10.5 L10.5 14.5 Z" fill="#4e4e4e"/></svg>
<div class="t" style="left:527px;top:581.5px;font-size:12px;font-family:'Liberation Sans',sans-serif;font-weight:bold;letter-spacing:-0.23px;">6 v</div>
<svg class="a" style="left:563px;top:578px" width="15" height="15"><path d="M0.5 4.5 L4.5 0.5 L14.5 0.5 L14.5 10.5 L10.5 14.5 L0.5 14.5 Z" fill="#c9c9c9" stroke="#777" stroke-width=".8"/><path d="M0.5 4.5 L4.5 0.5 L14.5 0.5 L10.5 4.5 Z" fill="#f0f0f0"/><path d="M10.5 4.5 L14.5 0.5 L14.5 10.5 L10.5 14.5 Z" fill="#4e4e4e"/></svg>
<div class="ind" style="left:589px;top:579px;width:69px;height:18px;padding-top:2px;">0.0000</div>
<div class="t" style="left:667px;top:583.8px;font-size:12px;font-family:'DejaVu Sans Condensed','Liberation Sans','DejaVu Sans',sans-serif;letter-spacing:0.00px;">V</div>
<div class="t" style="left:484px;top:603.5px;font-size:12px;font-family:'Liberation Sans',sans-serif;font-weight:bold;letter-spacing:-0.44px;">Heise gage</div>
<div class="chk" style="left:563px;top:600px;width:15px;height:15px;"></div>
<div class="ind" style="left:589px;top:601px;width:69px;height:18px;padding-top:2px;">2.402459</div>
<div class="t" style="left:667px;top:605.8px;font-size:12px;font-family:'DejaVu Sans Condensed','Liberation Sans','DejaVu Sans',sans-serif;letter-spacing:0.00px;">V</div>
<div class="ind" style="left:685px;top:447px;width:54px;height:18px;padding-top:2px;">0.032108</div>
<div class="ind" style="left:685px;top:513px;width:54px;height:18px;padding-top:2px;">1.296816</div>
<div class="a" style="left:358px;top:415px;width:19px;height:18px;background:#b4b4b4;border:2px solid;border-color:#7a7a7a #e6e6e6 #e6e6e6 #7a7a7a"></div>
<div class="a" style="left:358px;top:485px;width:17px;height:22px;background:#c5a56b;border:2px solid;border-color:#dcc08c #a98c58 #a98c58 #dcc08c"></div>
<div class="a" style="left:358px;top:488px;width:14px;height:16px;background:#fff"></div>
<div class="t" style="left:342px;top:545.75px;font-size:11.5px;font-family:'Liberation Mono','DejaVu Sans Mono',monospace;font-weight:bold;letter-spacing:0.10px;color:#efe6cf">Zero Internal</div>
<div class="t" style="left:343px;top:600.75px;font-size:11.5px;font-family:'Liberation Mono','DejaVu Sans Mono',monospace;font-weight:bold;letter-spacing:0.10px;color:#efe6cf">Stress Gauge</div>
<div class="a" style="left:337px;top:566px;width:80px;height:26px;border-radius:13px;background:linear-gradient(180deg,#fafafa,#d9d9d9 60%,#bdbdbd);border:1px solid #8d8d8d;box-shadow:2px 3px 3px rgba(0,0,0,.35)"></div>
<div class="t" style="left:361px;top:574px;font-size:12px;font-family:'DejaVu Sans Condensed','Liberation Sans','DejaVu Sans',sans-serif;letter-spacing:1.03px;">OFF</div>
<svg class="a" style="left:392px;top:572px" width="18" height="16"><path d="M1 1 L1 15 L17 8 Z" fill="#3f7a2a" stroke="#2d5a1e"/></svg>
<div class="t" style="left:380px;top:625.25px;font-size:11.5px;font-family:'DejaVu Sans Condensed','Liberation Sans','DejaVu Sans',sans-serif;letter-spacing:0.03px;">NOTES:</div>
<div class="a" style="left:0px;top:640px;width:839px;height:15px;background:linear-gradient(180deg,#c9c9c9,#f4f4f4 30%,#fff 60%,#ececec);border-top:1px solid #8d8d8d"></div>
<div class="a" style="left:217px;top:641px;width:568px;height:13px;border-radius:7px;background:linear-gradient(180deg,#2f55c4 0%,#5b93ec 14%,#6aa6f4 45%,#a4d4ff 56%,#b5e0ff 85%,#4a7fe0 100%);border:1px solid #2a4cb8;border-bottom-color:#555"></div>
<div class="a" style="left:777px;top:641px;width:34px;height:14px;border-radius:0 8px 8px 0;border-right:1px solid #a6a6a6;background:transparent"></div>
<svg class="a" style="left:811px;top:641px" width="28" height="14"><path d="M11 2.5 L11 11.5 L4 7 Z M19 2.5 L19 11.5 L26 7Z" fill="#333"/><rect x="14.5" y="0" width="1" height="14" fill="#b8b8b8"/></svg>
</div>
<div id="word" class="win" style="left:0;top:22px;width:183px;height:295px;background:#fff;overflow:visible;box-shadow:3px 4px 10px rgba(0,0,0,.45)">
<div class="a" style="left:0px;top:0px;width:183px;height:53px;background:linear-gradient(180deg,#cfcfcf 0%,#c2c2c2 40%,#b0b0b0 100%);border-bottom:1px solid #8a8a8a"></div>
<div class="a" style="left:155px;top:6px;width:21px;height:10px;border-radius:5px;background:linear-gradient(180deg,#fdfdfd,#d4d4d4);border:1px solid #7d7d7d"></div>
<div class="a" style="left:-20px;top:27px;width:181px;height:20px;border-radius:10px;background:linear-gradient(180deg,#b9b9b9,#c9c9c9);border:1px solid #9d9d9d;box-shadow:inset 0 1px 2px rgba(0,0,0,.18)"></div>
<div class="t" style="left:-1px;top:31px;font-size:13px;font-family:'DejaVu Sans Condensed','Liberation Sans','DejaVu Sans',sans-serif;letter-spacing:-0.82px;color:#a0a0a0">Document</div>
<svg class="a" style="left:166px;top:32px" width="14" height="11" viewBox="0 0 14 11"><path d="M1 1 L5.5 5.5 L1 10 M7 1 L11.5 5.5 L7 10" fill="none" stroke="#a9a9a9" stroke-width="2"/></svg>
<div class="a" style="left:0px;top:53px;width:183px;height:21px;background:linear-gradient(180deg,#e6ebf2,#d5dbe5);border-bottom:1px solid #c3c8d0"></div>
<div class="t" style="left:8px;top:58px;font-size:11px;font-family:'DejaVu Sans Condensed','Liberation Sans','DejaVu Sans',sans-serif;font-weight:bold;letter-spacing:-0.17px;color:#8a8d92">Review</div>
<div class="a" style="left:63px;top:54px;width:1px;height:19px;background:#bfc4cc"></div>
<div class="a" style="left:126px;top:56px;width:1px;height:15px;background:#b4b9c2"></div>
<svg class="a" style="left:134px;top:59px" width="12" height="8" viewBox="0 0 12 8"><path d="M1 1 L6 6 L11 1" fill="none" stroke="#9a9da3" stroke-width="1.6"/></svg>
<svg class="a" style="left:156px;top:56px" width="14" height="14" viewBox="-7 -7 14 14"><rect x="-1" y="-6.2" width="2" height="3" transform="rotate(0)" fill="#9fa2a8"/><rect x="-1" y="-6.2" width="2" height="3" transform="rotate(45)" fill="#9fa2a8"/><rect x="-1" y="-6.2" width="2" height="3" transform="rotate(90)" fill="#9fa2a8"/><rect x="-1" y="-6.2" width="2" height="3" transform="rotate(135)" fill="#9fa2a8"/><rect x="-1" y="-6.2" width="2" height="3" transform="rotate(180)" fill="#9fa2a8"/><rect x="-1" y="-6.2" width="2" height="3" transform="rotate(225)" fill="#9fa2a8"/><rect x="-1" y="-6.2" width="2" height="3" transform="rotate(270)" fill="#9fa2a8"/><rect x="-1" y="-6.2" width="2" height="3" transform="rotate(315)" fill="#9fa2a8"/><circle r="3.6" fill="none" stroke="#9fa2a8" stroke-width="1.8"/></svg>
<svg class="a" style="left:172px;top:61px" width="7" height="5" viewBox="0 0 7 5"><path d="M0 0 L7 0 L3.5 4.5 Z" fill="#a7aab0"/></svg>
<div class="a" style="left:0px;top:74px;width:168px;height:26px;background:#f1f1f1"></div>
<div class="a" style="left:-10px;top:79px;width:152px;height:14px;border-radius:7px;background:#f7f7f7;border:1px solid #c9ccd2"></div>
<div class="a" style="left:46px;top:79px;width:96px;height:14px;border-radius:0 7px 7px 0;background:linear-gradient(180deg,#c4daf2,#a7c6ea);border:1px solid #8fb0d8;border-left:none"></div>
<svg class="a" style="left:0;top:0" width="150" height="100"><rect x="3" y="83" width="1" height="5" fill="#6c7078"/><rect x="12" y="85" width="1" height="2" fill="#6c7078"/><rect x="21" y="85" width="1" height="2" fill="#6c7078"/><rect x="30" y="85" width="1" height="2" fill="#6c7078"/><rect x="39" y="83" width="1" height="5" fill="#6c7078"/><rect x="48" y="85" width="1" height="2" fill="#6c7078"/><rect x="57" y="85" width="1" height="2" fill="#6c7078"/><rect x="66" y="85" width="1" height="2" fill="#6c7078"/><rect x="75" y="83" width="1" height="5" fill="#6c7078"/><rect x="84" y="85" width="1" height="2" fill="#6c7078"/><rect x="93" y="85" width="1" height="2" fill="#6c7078"/><rect x="102" y="85" width="1" height="2" fill="#6c7078"/><rect x="129" y="85" width="1" height="2" fill="#6c7078"/><rect x="138" y="85" width="1" height="2" fill="#6c7078"/><path d="M43 84 L47 80 L51 84 L51 91 L43 91 Z" fill="#fff" stroke="#000" stroke-width="1"/><path d="M44 83 L50 83 L47 80Z" fill="#000"/></svg>
<div class="t ar" style="left:113px;top:80px;font-size:10px;color:#444">7</div>
<div class="a" style="left:120px;top:80px;width:1px;height:11px;background:#555"></div>
<div class="a" style="left:0px;top:100px;width:168px;height:195px;background:#a9afbd"></div>
<div class="a" style="left:137px;top:100px;width:31px;height:195px;background:linear-gradient(90deg,#a3a9b7,#b9bfcc 30%,#bcc2ce)"></div>
<div class="a" style="left:0px;top:100px;width:137px;height:56px;background:#fff"></div>
<div class="a" style="left:0px;top:167px;width:137px;height:128px;background:#fff"></div>
<div class="t" style="left:0px;top:240.25px;font-size:12.5px;font-family:'Liberation Serif',serif;letter-spacing:0.13px;color:#111">d·edot·</div>
<div class="t" style="left:0px;top:254.25px;font-size:12.5px;font-family:'Liberation Serif',serif;letter-spacing:0.02px;color:#111">so·weak·</div>
<div class="t" style="left:0px;top:268.25px;font-size:12.5px;font-family:'Liberation Serif',serif;letter-spacing:-0.11px;color:#111">ed·after·</div>
<div class="a" style="left:168px;top:74px;width:15px;height:221px;background:linear-gradient(90deg,#d9d9d9,#fdfdfd 35%,#fff 70%,#e9e9e9)"></div>
<div class="a" style="left:169px;top:74px;width:14px;height:14px;background:linear-gradient(180deg,#6fa0e6,#3f78d2);border:1px solid #2f5fb0"></div>
<div class="a" style="left:171px;top:78px;width:10px;height:1px;background:#dbe8fb"></div>
<div class="a" style="left:171px;top:82px;width:10px;height:1px;background:#dbe8fb"></div>
<div class="a" style="left:169px;top:89px;width:14px;height:12px;border-radius:7px 7px 0 0;background:linear-gradient(90deg,#cfcfcf,#fff 50%,#e2e2e2);border-top:1px solid #aaa"></div>
</div>
<div id="note" class="win" style="left:707px;top:794px;width:307px;height:89px;background:#fdf6a2;box-shadow:0 2px 8px rgba(0,0,0,.4)">
<div class="a" style="left:0px;top:0px;width:307px;height:13px;background:#fcee7e;border-bottom:1.5px solid #c9ac18"></div>
<div class="t" style="left:10px;top:16px;font-size:12px;font-family:'Liberation Sans',sans-serif;letter-spacing:0.10px;">5/13/13 2240 hrs  0.154535"/0.063101</div>
<div class="t" style="left:247.5px;top:16px;font-size:12px;font-family:'Liberation Sans',sans-serif;letter-spacing:-0.17px;">#2027</div>
<div class="t" style="left:10px;top:30px;font-size:12px;font-family:'Liberation Sans',sans-serif;letter-spacing:0.10px;">5/14/13 0617 hrs  0.158422"/0.064689</div>
<div class="t" style="left:247.5px;top:30px;font-size:12px;font-family:'Liberation Sans',sans-serif;letter-spacing:-0.17px;">#4629</div>
<div class="t" style="left:10px;top:44px;font-size:12px;font-family:'Liberation Sans',sans-serif;letter-spacing:0.12px;">5/14/13 1132 hrs  0.160866"/0.065686</div>
<div class="t" style="left:247.5px;top:44px;font-size:12px;font-family:'Liberation Sans',sans-serif;letter-spacing:-0.17px;">#6430</div>
<div class="t" style="left:10px;top:58px;font-size:12px;font-family:'Liberation Sans',sans-serif;letter-spacing:0.13px;">5/14/13 1303 hrs  0.165700"/0.067660 (2e) #385</div>
<div class="t" style="left:10px;top:72px;font-size:12px;font-family:'Liberation Sans',sans-serif;letter-spacing:0.10px;">5/14/13 2125 hrs  0.172832"/0.070572</div>
<div class="t" style="left:247.5px;top:72px;font-size:12px;font-family:'Liberation Sans',sans-serif;letter-spacing:-0.17px;">#3235</div>
</div>
<div id="motor" class="win" style="left:0;top:312px;width:541px;height:571px;background:#b3b3b3;overflow:visible;box-shadow:0 -2px 14px rgba(0,0,0,.5),5px 2px 14px rgba(0,0,0,.5)">
<div class="a" style="left:0;top:0;width:541px;height:571px;overflow:hidden">
<div class="titlebar" style="background:linear-gradient(180deg,#e8e8e8 0%,#d6d6d6 50%,#c4c4c4 100%);border-bottom:1px solid #6f6f6f;border-radius:5px 5px 0 0"></div>
<div class="a" style="left:11.5px;top:5.5px;width:7.0px;height:4.5px;border-radius:50%;background:linear-gradient(180deg,rgba(255,255,255,.85),rgba(255,255,255,.05));z-index:2"></div><div class="a" style="left:8.5px;top:4.5px;width:13.0px;height:13.0px;border-radius:50%;background:radial-gradient(circle at 50% 30%,#ffb0a8 0%,#e8382c 55%,#a01810 100%);border:1px solid rgba(0,0,0,.45);box-shadow:0 1px 0 rgba(255,255,255,.5)"></div>
<div class="a" style="left:32.5px;top:5.5px;width:7.0px;height:4.5px;border-radius:50%;background:linear-gradient(180deg,rgba(255,255,255,.85),rgba(255,255,255,.05));z-index:2"></div><div class="a" style="left:29.5px;top:4.5px;width:13.0px;height:13.0px;border-radius:50%;background:radial-gradient(circle at 50% 30%,#ffe9a0 0%,#f0a828 55%,#b87010 100%);border:1px solid rgba(0,0,0,.45);box-shadow:0 1px 0 rgba(255,255,255,.5)"></div>
<div class="a" style="left:53.5px;top:5.5px;width:7.0px;height:4.5px;border-radius:50%;background:linear-gradient(180deg,rgba(255,255,255,.85),rgba(255,255,255,.05));z-index:2"></div><div class="a" style="left:50.5px;top:4.5px;width:13.0px;height:13.0px;border-radius:50%;background:radial-gradient(circle at 50% 30%,#d8f8b0 0%,#6cc038 55%,#3a8018 100%);border:1px solid rgba(0,0,0,.45);box-shadow:0 1px 0 rgba(255,255,255,.5)"></div>
<div class="a" style="left:181px;top:5px;width:10px;height:12px;background:#f4f4f4;border:1px solid #8a8a8a"></div>
<div class="a" style="left:183px;top:8px;width:6px;height:4px;background:#9aa8b8"></div>
<div class="a" style="left:188px;top:13px;width:6px;height:5px;background:#5f7550;border:1px solid #ccc"></div>
<div class="t" style="left:199px;top:4.5px;font-size:13px;font-family:'DejaVu Sans Condensed','Liberation Sans','DejaVu Sans',sans-serif;letter-spacing:0.46px;">Motor driver 10 to 1 v8.vi</div>
<div class="toolbar" style="top:22px;height:35px;border-bottom:1px solid #5f5f5f;background:#ececec"></div>
<svg class="a" style="left:54px;top:32px" width="14" height="14" viewBox="0 0 14 14"><path d="M2.5 4.5 L6.5 4.5 L6.5 1.5 L12.5 7 L6.5 12.5 L6.5 9.5 L2.5 9.5 Z" fill="#fff" stroke="#000" stroke-width="1.3"/><path d="M0 5.5 h1.5 M0 8.5 h1.5" stroke="#000" stroke-width="1.2"/></svg>
<div class="a" style="left:119px;top:28px;width:22px;height:22px;background:#f3f3f3;border:1px solid #8e8e8e"></div>
<div class="a" style="left:125px;top:34px;width:4px;height:10px;background:#000"></div>
<div class="a" style="left:131px;top:34px;width:4px;height:10px;background:#000"></div>
<div class="a" style="left:482px;top:29px;width:22px;height:21px;background:linear-gradient(180deg,#e6e6e6,#f6f6f6);border:1px solid #bdbdbd"></div>
<div class="t" style="left:487.5px;top:30px;font-size:18px;font-family:'Liberation Sans',sans-serif;font-weight:bold;letter-spacing:0.00px;color:#f4ee6a;-webkit-text-stroke:1px #222">?</div>
<div class="a" style="left:507px;top:22px;width:34px;height:34px;background:#fff;border:1px solid #000;box-shadow:inset 0 0 0 1px #fff,inset 0 0 0 2px #000"></div>
<div class="a" style="left:514px;top:26px;width:17px;height:8px;background:#fff;border:1px solid #000"></div>
<div class="a" style="left:531px;top:28px;width:4px;height:4px;background:#000"></div>
<div class="t" style="left:512px;top:35.25px;font-size:9.5px;font-family:'DejaVu Sans Condensed','Liberation Sans','DejaVu Sans',sans-serif;letter-spacing:0.07px;">motor</div>
<div class="t" style="left:515px;top:44.25px;font-size:9.5px;font-family:'DejaVu Sans Condensed','Liberation Sans','DejaVu Sans',sans-serif;letter-spacing:0.08px;">10:1</div>
<div class="cap" style="left:85px;top:60px;width:31px;height:14px;padding:0"><div class="t" style="left:2px;top:0px;font-size:12px;font-family:'DejaVu Sans Condensed','Liberation Sans','DejaVu Sans',sans-serif;letter-spacing:-0.86px;">Mode</div></div>
<div class="a" style="left:81px;top:76px;width:205px;height:67px;background:#fff;border:1px solid #000;border-top:2px solid #555;border-left:2px solid #555"></div>
<div class="a" style="left:83px;top:111.5px;width:187px;height:16.5px;background:#3a6ed6"></div>
<div class="t" style="left:88px;top:79.25px;font-size:13.5px;font-family:'DejaVu Sans Condensed','Liberation Sans','DejaVu Sans',sans-serif;letter-spacing:0.21px;">Withdraw piston</div>
<div class="t" style="left:88px;top:96.25px;font-size:13.5px;font-family:'DejaVu Sans Condensed','Liberation Sans','DejaVu Sans',sans-serif;letter-spacing:0.16px;">Constant displacement rate</div>
<div class="t" style="left:88px;top:113.25px;font-size:13.5px;font-family:'DejaVu Sans Condensed','Liberation Sans','DejaVu Sans',sans-serif;letter-spacing:0.28px;">Constant load</div>
<div class="t" style="left:88px;top:129.75px;font-size:13.5px;font-family:'DejaVu Sans Condensed','Liberation Sans','DejaVu Sans',sans-serif;letter-spacing:0.21px;">Load relaxation</div>
<div class="a" style="left:270px;top:78px;width:15px;height:64px;background:linear-gradient(90deg,#d4d4d4,#fff 50%,#e8e8e8);border-left:1px solid #999"></div>
<div class="a" style="left:271px;top:82px;width:13px;height:26px;border-radius:6px;background:linear-gradient(90deg,#3b74e0 0%,#a9d0ff 35%,#d4ebff 50%,#7fb2f4 75%,#3f7ee6 100%);border:1px solid #2c55b4"></div>
<svg class="a" style="left:271px;top:110px" width="13" height="31"><path d="M6.5 3 L10.5 10 L2.5 10Z M6.5 27 L10.5 20 L2.5 20Z" fill="#555"/><rect x="0" y="14.5" width="13" height="1" fill="#aaa"/></svg>
<div class="t" style="left:245px;top:57.5px;font-size:17px;font-family:'DejaVu Sans Condensed','Liberation Sans','DejaVu Sans',sans-serif;font-weight:bold;letter-spacing:0.00px;color:#f0141e">^</div>
<div class="t" style="left:255px;top:58.5px;font-size:12px;font-family:'DejaVu Sans Condensed','Liberation Sans','DejaVu Sans',sans-serif;font-weight:bold;letter-spacing:-0.03px;color:#f0141e">SEE NOTE</div>
<svg class="a" style="left:323px;top:64px" width="10" height="15"><text x="0" y="7" font-size="8" font-family="Liberation Sans, sans-serif" font-weight="bold">I</text><text x="4" y="14" font-size="8" font-family="Liberation Sans, sans-serif" font-weight="bold">0</text><path d="M1 13 L8 2" stroke="#000" stroke-width=".8"/></svg>
<div class="a" style="left:322px;top:61px;width:144px;height:20px;border:1px solid;border-color:#e4e4e4 #777 #777 #e4e4e4"></div>
<div class="a" style="left:332px;top:63px;width:115px;height:16px;background:#c6c6c6;border:2px solid;border-color:#7a7a7a #e6e6e6 #e6e6e6 #7a7a7a"></div>
<div class="t" style="left:336px;top:65px;font-size:12px;font-family:'DejaVu Sans Condensed','Liberation Sans','DejaVu Sans',sans-serif;letter-spacing:-0.26px;">ASRL1::INSTR</div>
<div class="a" style="left:447px;top:62px;width:18px;height:17px;background:#c4c4c4;border:2px solid;border-color:#eee #000 #000 #eee;outline:1px solid #555"></div>
<svg class="a" style="left:451px;top:68px" width="10" height="6"><path d="M0 0 L10 0 L5 6 Z" fill="#000"/></svg>
<div class="cap" style="left:299px;top:92px;width:69px;height:14px;padding:0"><div class="t" style="left:2px;top:0px;font-size:12px;font-family:'DejaVu Sans Condensed','Liberation Sans','DejaVu Sans',sans-serif;letter-spacing:-0.29px;">Active string</div></div>
<div class="cap" style="left:382px;top:90px;width:61px;height:14px;padding:0"><div class="t" style="left:2px;top:0px;font-size:12px;font-family:'DejaVu Sans Condensed','Liberation Sans','DejaVu Sans',sans-serif;letter-spacing:-0.27px;">Sent string</div></div>
<div class="cap" style="left:454px;top:91px;width:62px;height:14px;padding:0"><div class="t" style="left:2px;top:0px;font-size:12px;font-family:'DejaVu Sans Condensed','Liberation Sans','DejaVu Sans',sans-serif;letter-spacing:-0.52px;">Read String</div></div>
<div class="a" style="left:299px;top:108px;width:62px;height:144px;background:#c9c9c9;border:2px solid;border-color:#7a7a7a #e6e6e6 #e6e6e6 #7a7a7a;outline:1px solid #9a9a9a"></div>
<div class="t" style="left:306px;top:113px;font-size:12px;font-family:'DejaVu Sans Condensed','Liberation Sans','DejaVu Sans',sans-serif;letter-spacing:0.00px;">LD3</div>
<div class="t" style="left:306px;top:126.1px;font-size:12px;font-family:'DejaVu Sans Condensed','Liberation Sans','DejaVu Sans',sans-serif;letter-spacing:0.00px;">MC</div>
<div class="t" style="left:306px;top:139.2px;font-size:12px;font-family:'DejaVu Sans Condensed','Liberation Sans','DejaVu Sans',sans-serif;letter-spacing:0.00px;">A10</div>
<div class="t" style="left:306px;top:152.3px;font-size:12px;font-family:'DejaVu Sans Condensed','Liberation Sans','DejaVu Sans',sans-serif;letter-spacing:0.00px;">MR200</div>
<div class="t" style="left:306px;top:165.4px;font-size:12px;font-family:'DejaVu Sans Condensed','Liberation Sans','DejaVu Sans',sans-serif;letter-spacing:0.00px;">H-</div>
<div class="t" style="left:306px;top:178.5px;font-size:12px;font-family:'DejaVu Sans Condensed','Liberation Sans','DejaVu Sans',sans-serif;letter-spacing:0.00px;">V0.11</div>
<div class="t" style="left:306px;top:191.6px;font-size:12px;font-family:'DejaVu Sans Condensed','Liberation Sans','DejaVu Sans',sans-serif;letter-spacing:0.00px;">G</div>
<div class="a" style="left:373px;top:108px;width:63px;height:144px;background:#c9c9c9;border:2px solid;border-color:#7a7a7a #e6e6e6 #e6e6e6 #7a7a7a;outline:1px solid #9a9a9a"></div>
<div class="a" style="left:448px;top:110px;width:61px;height:144px;background:#c9c9c9;border:2px solid;border-color:#7a7a7a #e6e6e6 #e6e6e6 #7a7a7a;outline:1px solid #9a9a9a"></div>
<div class="frame" style="left:11px;top:146px;width:275px;height:133px;"></div>
<div class="cap" style="left:34px;top:156px;width:31px;height:14px;padding:0"><div class="t" style="left:2px;top:0px;font-size:12px;font-family:'DejaVu Sans Condensed','Liberation Sans','DejaVu Sans',sans-serif;letter-spacing:-0.84px;">set pt</div></div>
<svg class="spin" style="left:68px;top:154px;height:17px" viewBox="0 0 7 17"><rect x="0" y="0" width="7" height="17" fill="#d6d6d6"/><path d="M0 8.5 H7 M6.5 0 V17 M0 16.5 H7" stroke="#777" stroke-width="1" fill="none"/><path d="M0.5 17 V0.5 H7" stroke="#f4f4f4" stroke-width="1" fill="none"/><path d="M3.5 1.5 L6.3 5.3 L0.7 5.3 Z" fill="#000"/><rect x="1" y="5.9" width="5" height="1.2" fill="#000"/><path d="M3.5 15.5 L6.3 11.7 L0.7 11.7 Z" fill="#000"/><rect x="1" y="9.9" width="5" height="1.2" fill="#000"/></svg>
<div class="ind" style="left:76px;top:154px;width:66px;height:17px;padding-top:1px;">0.023000</div>
<div class="cap" style="left:16px;top:176px;width:61px;height:14px;padding:0"><div class="t" style="left:2px;top:0px;font-size:12px;font-family:'DejaVu Sans Condensed','Liberation Sans','DejaVu Sans',sans-serif;letter-spacing:-0.43px;">gauge zero</div></div>
<svg class="spin" style="left:79px;top:174px;height:17px" viewBox="0 0 7 17"><rect x="0" y="0" width="7" height="17" fill="#d6d6d6"/><path d="M0 8.5 H7 M6.5 0 V17 M0 16.5 H7" stroke="#777" stroke-width="1" fill="none"/><path d="M0.5 17 V0.5 H7" stroke="#f4f4f4" stroke-width="1" fill="none"/><path d="M3.5 1.5 L6.3 5.3 L0.7 5.3 Z" fill="#000"/><rect x="1" y="5.9" width="5" height="1.2" fill="#000"/><path d="M3.5 15.5 L6.3 11.7 L0.7 11.7 Z" fill="#000"/><rect x="1" y="9.9" width="5" height="1.2" fill="#000"/></svg>
<div class="ind" style="left:87px;top:174px;width:55px;height:17px;padding-top:1px;">0.007172</div>
<svg class="spin" style="left:146px;top:159px;height:17px" viewBox="0 0 7 17"><rect x="0" y="0" width="7" height="17" fill="#d6d6d6"/><path d="M0 8.5 H7 M6.5 0 V17 M0 16.5 H7" stroke="#777" stroke-width="1" fill="none"/><path d="M0.5 17 V0.5 H7" stroke="#f4f4f4" stroke-width="1" fill="none"/><path d="M3.5 1.5 L6.3 5.3 L0.7 5.3 Z" fill="#000"/><rect x="1" y="5.9" width="5" height="1.2" fill="#000"/><path d="M3.5 15.5 L6.3 11.7 L0.7 11.7 Z" fill="#000"/><rect x="1" y="9.9" width="5" height="1.2" fill="#000"/></svg>
<div class="ind" style="left:153px;top:159px;width:60px;height:17px;padding-top:1px;">50.00</div>
<div class="cap" style="left:217px;top:161px;width:26px;height:14px;padding:0"><div class="t" style="left:2px;top:0px;font-size:12px;font-family:'DejaVu Sans Condensed','Liberation Sans','DejaVu Sans',sans-serif;letter-spacing:-0.73px;">Prop</div></div>
<svg class="spin" style="left:146px;top:179px;height:17px" viewBox="0 0 7 17"><rect x="0" y="0" width="7" height="17" fill="#d6d6d6"/><path d="M0 8.5 H7 M6.5 0 V17 M0 16.5 H7" stroke="#777" stroke-width="1" fill="none"/><path d="M0.5 17 V0.5 H7" stroke="#f4f4f4" stroke-width="1" fill="none"/><path d="M3.5 1.5 L6.3 5.3 L0.7 5.3 Z" fill="#000"/><rect x="1" y="5.9" width="5" height="1.2" fill="#000"/><path d="M3.5 15.5 L6.3 11.7 L0.7 11.7 Z" fill="#000"/><rect x="1" y="9.9" width="5" height="1.2" fill="#000"/></svg>
<div class="ind" style="left:153px;top:179px;width:60px;height:17px;padding-top:1px;">0.000003</div>
<div class="cap" style="left:217px;top:181px;width:19px;height:14px;padding:0"><div class="t" style="left:2px;top:0px;font-size:12px;font-family:'DejaVu Sans Condensed','Liberation Sans','DejaVu Sans',sans-serif;letter-spacing:-0.09px;">Int</div></div>
<svg class="spin" style="left:146px;top:198px;height:17px" viewBox="0 0 7 17"><rect x="0" y="0" width="7" height="17" fill="#d6d6d6"/><path d="M0 8.5 H7 M6.5 0 V17 M0 16.5 H7" stroke="#777" stroke-width="1" fill="none"/><path d="M0.5 17 V0.5 H7" stroke="#f4f4f4" stroke-width="1" fill="none"/><path d="M3.5 1.5 L6.3 5.3 L0.7 5.3 Z" fill="#000"/><rect x="1" y="5.9" width="5" height="1.2" fill="#000"/><path d="M3.5 15.5 L6.3 11.7 L0.7 11.7 Z" fill="#000"/><rect x="1" y="9.9" width="5" height="1.2" fill="#000"/></svg>
<div class="ind" style="left:153px;top:198px;width:60px;height:17px;padding-top:1px;">0.150000</div>
<div class="cap" style="left:217px;top:200px;width:64px;height:14px;padding:0"><div class="t" style="left:2px;top:0px;font-size:12px;font-family:'DejaVu Sans Condensed','Liberation Sans','DejaVu Sans',sans-serif;letter-spacing:0.00px;">hi reset limit</div></div>
<svg class="spin" style="left:146px;top:217px;height:17px" viewBox="0 0 7 17"><rect x="0" y="0" width="7" height="17" fill="#d6d6d6"/><path d="M0 8.5 H7 M6.5 0 V17 M0 16.5 H7" stroke="#777" stroke-width="1" fill="none"/><path d="M0.5 17 V0.5 H7" stroke="#f4f4f4" stroke-width="1" fill="none"/><path d="M3.5 1.5 L6.3 5.3 L0.7 5.3 Z" fill="#000"/><rect x="1" y="5.9" width="5" height="1.2" fill="#000"/><path d="M3.5 15.5 L6.3 11.7 L0.7 11.7 Z" fill="#000"/><rect x="1" y="9.9" width="5" height="1.2" fill="#000"/></svg>
<div class="ind" style="left:153px;top:217px;width:60px;height:17px;padding-top:1px;">0.050000</div>
<div class="cap" style="left:217px;top:219px;width:64px;height:14px;padding:0"><div class="t" style="left:2px;top:0px;font-size:12px;font-family:'DejaVu Sans Condensed','Liberation Sans','DejaVu Sans',sans-serif;letter-spacing:0.00px;">lo reset limit</div></div>
<svg class="spin" style="left:146px;top:236px;height:17px" viewBox="0 0 7 17"><rect x="0" y="0" width="7" height="17" fill="#d6d6d6"/><path d="M0 8.5 H7 M6.5 0 V17 M0 16.5 H7" stroke="#777" stroke-width="1" fill="none"/><path d="M0.5 17 V0.5 H7" stroke="#f4f4f4" stroke-width="1" fill="none"/><path d="M3.5 1.5 L6.3 5.3 L0.7 5.3 Z" fill="#000"/><rect x="1" y="5.9" width="5" height="1.2" fill="#000"/><path d="M3.5 15.5 L6.3 11.7 L0.7 11.7 Z" fill="#000"/><rect x="1" y="9.9" width="5" height="1.2" fill="#000"/></svg>
<div class="ind" style="left:153px;top:236px;width:50px;height:17px;padding-top:1px;">0.15</div>
<div class="cap" style="left:205px;top:239px;width:53px;height:14px;padding:0"><div class="t" style="left:2px;top:0px;font-size:12px;font-family:'DejaVu Sans Condensed','Liberation Sans','DejaVu Sans',sans-serif;letter-spacing:-0.35px;">total limit</div></div>
<svg class="spin" style="left:103px;top:254px;height:17px" viewBox="0 0 7 17"><rect x="0" y="0" width="7" height="17" fill="#d6d6d6"/><path d="M0 8.5 H7 M6.5 0 V17 M0 16.5 H7" stroke="#777" stroke-width="1" fill="none"/><path d="M0.5 17 V0.5 H7" stroke="#f4f4f4" stroke-width="1" fill="none"/><path d="M3.5 1.5 L6.3 5.3 L0.7 5.3 Z" fill="#000"/><rect x="1" y="5.9" width="5" height="1.2" fill="#000"/><path d="M3.5 15.5 L6.3 11.7 L0.7 11.7 Z" fill="#000"/><rect x="1" y="9.9" width="5" height="1.2" fill="#000"/></svg>
<div class="ind" style="left:111px;top:254px;width:49px;height:17px;padding-top:1px;">0.2916</div>
<div class="cap" style="left:163px;top:257px;width:104px;height:14px;padding:0"><div class="t" style="left:2px;top:0px;font-size:12px;font-family:'DejaVu Sans Condensed','Liberation Sans','DejaVu Sans',sans-serif;letter-spacing:-0.20px;">1st pist contact (V)</div></div>
<div class="a" style="left:90px;top:280px;width:53px;height:43px;border-radius:50%;background:#d9d3f2;border:1.5px solid #222;box-shadow:inset 0 0 0 2px #ece8fa"></div>
<div class="t" style="left:95.5px;top:293px;font-size:16px;font-family:'DejaVu Sans Condensed','Liberation Sans','DejaVu Sans',sans-serif;font-weight:bold;letter-spacing:-0.12px;color:#e8101c">STOP</div>
<div class="a" style="left:148px;top:286px;width:18px;height:17px;background:#1c1c1c;border:1px solid #000;box-shadow:0 0 0 1px #888"></div>
<svg class="a" style="left:150px;top:287px" width="15" height="14" viewBox="-7.5 -7 15 14"><path d="M-5 0 H5 M0 -5 V5 M-4 -4 L4 4 M-4 4 L4 -4" stroke="#cfcfcf" stroke-width="1"/></svg>
<div class="t" style="left:172.5px;top:288.25px;font-size:11.5px;font-family:'DejaVu Sans Condensed','Liberation Sans','DejaVu Sans',sans-serif;font-weight:bold;letter-spacing:-0.28px;">Motor running</div>
<div class="t" style="left:256.5px;top:280.5px;font-size:12px;font-family:'DejaVu Sans Condensed','Liberation Sans','DejaVu Sans',sans-serif;letter-spacing:-0.14px;">internal force gauge (v)</div>
<div class="ind" style="left:263px;top:295px;width:59px;height:16px;padding-top:0px;">0.032118</div>
<div class="chk" style="left:330px;top:296px;width:15px;height:14px;"></div>
<div class="t" style="left:349.5px;top:298.75px;font-size:10.5px;font-family:'DejaVu Sans Condensed','Liberation Sans','DejaVu Sans',sans-serif;font-weight:bold;letter-spacing:-0.37px;">smooth</div>
<div class="a" style="left:400px;top:293px;width:41px;height:18px;background:#c2c2c2;border:1px solid;border-color:#eee #666 #666 #eee"></div>
<div class="t" style="left:409px;top:294.5px;font-size:14px;font-family:'DejaVu Sans Condensed','Liberation Sans','DejaVu Sans',sans-serif;letter-spacing:0.00px;">3</div>
<svg class="a" style="left:423px;top:299px" width="16" height="8"><path d="M0 0 L16 0 L8 8 Z" fill="#000"/></svg>
<div class="t" style="left:444px;top:297.75px;font-size:11.5px;font-family:'DejaVu Sans Condensed','Liberation Sans','DejaVu Sans',sans-serif;font-weight:bold;letter-spacing:-0.31px;"># of pts</div>
<div class="ind" style="left:263px;top:314px;width:59px;height:15px;padding-top:0px;">0.116440</div>
<div class="t" style="left:331.5px;top:316.5px;font-size:12px;font-family:'DejaVu Sans Condensed','Liberation Sans','DejaVu Sans',sans-serif;letter-spacing:-0.05px;">current reset</div>
<div class="ind" style="left:263px;top:332px;width:59px;height:15px;padding-top:0px;">0.024747</div>
<div class="cap" style="left:329px;top:334px;width:76px;height:14px;padding:0"><div class="t" style="left:2px;top:0px;font-size:12px;font-family:'DejaVu Sans Condensed','Liberation Sans','DejaVu Sans',sans-serif;letter-spacing:-0.17px;">current set pt</div></div>
<div class="ind" style="left:263px;top:350px;width:59px;height:16px;padding-top:0px;">0.031919</div>
<div class="cap" style="left:329px;top:352px;width:99px;height:14px;padding:0"><div class="t" style="left:2px;top:0px;font-size:12px;font-family:'DejaVu Sans Condensed','Liberation Sans','DejaVu Sans',sans-serif;letter-spacing:-0.15px;">current command</div></div>
<div class="a" style="left:295px;top:259px;width:99px;height:17px;background:#c9c9c9;border:2px solid;border-color:#7a7a7a #e6e6e6 #e6e6e6 #7a7a7a;outline:1px solid #9a9a9a"></div>
<div class="t" style="left:398px;top:263px;font-size:12px;font-family:'DejaVu Sans Condensed','Liberation Sans','DejaVu Sans',sans-serif;letter-spacing:-0.05px;">current selected displac</div>
<div class="cframe" style="left:79px;top:364px;width:360px;height:91px;"></div>
<div class="a" style="left:127px;top:374px;width:299px;height:58px;background:#000"></div>
<div class="t" style="right:422.2px;top:368.5px;font-size:12px;font-family:'DejaVu Sans Condensed','Liberation Sans','DejaVu Sans',sans-serif;letter-spacing:-0.2px;">0.20</div>
<div class="a" style="left:120px;top:374.0px;width:7px;height:1.5px;background:#111"></div>
<div class="t" style="right:422.2px;top:397px;font-size:12px;font-family:'DejaVu Sans Condensed','Liberation Sans','DejaVu Sans',sans-serif;letter-spacing:-0.2px;">0.10</div>
<div class="a" style="left:120px;top:402.5px;width:7px;height:1.5px;background:#111"></div>
<div class="t" style="right:422.2px;top:425.5px;font-size:12px;font-family:'DejaVu Sans Condensed','Liberation Sans','DejaVu Sans',sans-serif;letter-spacing:-0.2px;">0.00</div>
<div class="a" style="left:120px;top:431.0px;width:7px;height:1.5px;background:#111"></div>
<div class="a" style="left:127px;top:432px;width:1px;height:5px;background:#000"></div>
<div class="a" style="left:425px;top:432px;width:1px;height:5px;background:#000"></div>
<div class="t" style="left:122px;top:439.25px;font-size:11.5px;font-family:'DejaVu Sans Condensed','Liberation Sans','DejaVu Sans',sans-serif;letter-spacing:-0.08px;">11</div>
<div class="t" style="left:412px;top:439.25px;font-size:11.5px;font-family:'DejaVu Sans Condensed','Liberation Sans','DejaVu Sans',sans-serif;letter-spacing:-0.08px;">3246</div>
<svg class="a" style="left:0;top:0" width="541" height="571"><polyline points="140.0,374.0 141.0,400.0 142.0,408.5 143.0,396.0 144.0,392.7 145.0,389.3 146.0,386.0 147.0,385.9 148.0,385.8 149.0,386.9 150.0,386.8 151.0,388.0 152.0,386.5 153.0,389.0 154.0,389.6 155.0,391.5 156.0,390.8 157.0,390.1 158.0,390.7 159.0,392.6 160.0,393.2 161.0,395.1 162.0,394.4 163.0,395.0 164.0,395.3 165.0,395.6 166.0,397.2 167.0,396.2 168.0,396.5 169.0,396.5 170.0,396.4 171.0,396.4 172.0,395.1 173.0,396.4 174.0,395.0 175.0,396.3 176.0,396.3 177.0,396.2 178.0,397.5 179.0,397.5 180.0,396.1 181.0,396.1 182.0,397.4 183.0,396.1 184.0,396.0 185.0,397.3 186.0,396.2 187.0,396.3 188.0,395.2 189.0,396.7 190.0,396.8 191.0,397.0 192.0,397.2 193.0,397.3 194.0,398.8 195.0,397.7 196.0,396.5 197.0,398.0 198.0,398.2 199.0,398.3 200.0,398.5 201.0,398.5 202.0,399.9 203.0,398.6 204.0,397.4 205.0,398.8 206.0,398.8 207.0,400.1 208.0,398.9 209.0,397.7 210.0,397.7 211.0,398.5 212.0,399.3 213.0,397.5 214.0,398.3 215.0,396.5 216.0,397.8 217.0,396.5 218.0,396.6 219.0,396.6 220.0,396.6 221.0,395.3 222.0,398.0 223.0,398.0 224.0,396.7 225.0,398.0 226.0,396.7 227.0,396.8 228.0,396.8 229.0,396.8 230.0,396.8 231.0,395.5 232.0,396.9 233.0,396.9 234.0,396.9 235.0,396.9 236.0,397.0 237.0,397.0 238.0,397.0 239.0,397.6 240.0,398.2 241.0,397.5 242.0,399.4 243.0,401.3 244.0,400.5 245.0,402.3 246.0,402.8 247.0,402.0 248.0,399.3 249.0,396.7 250.0,394.0 251.0,390.9 252.0,390.3 253.0,388.5 254.0,389.0 255.0,389.5 256.0,390.0 257.0,388.7 258.0,390.0 259.0,391.3 260.0,391.3 261.0,390.1 262.0,390.1 263.0,390.1 264.0,390.1 265.0,388.8 266.0,391.4 267.0,391.4 268.0,388.8 269.0,391.4 270.0,390.2 271.0,390.2 272.0,390.2 273.0,390.2 274.0,390.2 275.0,391.5 276.0,391.5 277.0,390.2 278.0,390.2 279.0,390.3 280.0,390.3 281.0,390.3 282.0,390.3 283.0,390.3 284.0,390.3 285.0,390.3 286.0,390.3 287.0,390.4 288.0,390.4 289.0,390.4 290.0,390.4 291.0,391.7 292.0,390.4 293.0,390.4 294.0,390.4 295.0,390.4 296.0,390.5 297.0,390.5 298.0,390.5 299.0,391.8 300.0,390.5 301.0,390.5 302.0,390.5 303.0,390.5 304.0,390.6 305.0,390.6 306.0,390.6 307.0,390.6 308.0,390.6 309.0,391.9 310.0,392.0 311.0,392.0 312.0,392.0 313.0,390.7 314.0,390.7 315.0,390.8 316.0,389.5 317.0,392.1 318.0,389.5 319.0,390.8 320.0,390.8 321.0,390.9 322.0,390.9 323.0,390.9 324.0,390.9 325.0,390.9 326.0,389.6 327.0,391.0 328.0,391.0 329.0,391.0 330.0,389.7 331.0,391.0 332.0,391.0 333.0,391.0 334.0,392.2 335.0,390.9 336.0,389.6 337.0,390.9 338.0,390.9 339.0,390.9 340.0,392.2 341.0,390.8 342.0,390.8 343.0,390.8 344.0,389.5 345.0,390.8 346.0,392.1 347.0,389.5 348.0,390.8 349.0,390.7 350.0,390.7 351.0,390.7 352.0,390.7 353.0,390.7 354.0,390.7 355.0,390.7 356.0,390.6 357.0,390.6 358.0,390.6 359.0,389.3 360.0,390.6 361.0,390.6 362.0,390.6 363.0,390.5 364.0,390.5 365.0,390.5 366.0,390.5 367.0,390.9 368.0,391.3 369.0,393.0 370.0,392.2 371.0,392.6 372.0,393.0 373.0,393.5 374.0,392.7 375.0,394.5 376.0,396.3 377.0,395.5 378.0,396.0 379.0,396.4 380.0,395.5 381.0,397.2 382.0,397.7 383.0,399.4 384.0,398.5 385.0,397.2 386.0,398.5 387.0,398.5 388.0,399.8 389.0,398.5 390.0,399.8 391.0,398.5 392.0,397.2 393.0,398.5 394.0,398.5 395.0,398.5 396.0,398.5 397.0,399.8 398.0,398.5 399.0,398.5 400.0,399.8 401.0,397.2 402.0,398.5 403.0,398.5 404.0,398.5 405.0,397.2 406.0,398.5 407.0,399.8 408.0,398.5 409.0,399.8 410.0,398.5 411.0,398.5 412.0,398.5 413.0,398.5 414.0,398.5 415.0,398.5 416.0,398.5 417.0,398.5 418.0,398.5 419.0,398.5 420.0,398.5 421.0,399.8 422.0,398.5 423.0,398.5 424.0,398.5 425.0,399.8" fill="none" stroke="#fff" stroke-width="1.5" stroke-linejoin="round"/></svg>
<div class="a" style="left:133px;top:374px;width:1px;height:4px;background:#fff"></div><div class="a" style="left:139px;top:374px;width:2px;height:5px;background:#fff"></div>
<div class="ind" style="left:443px;top:374px;width:47px;height:17px;padding-top:1px;">0.1100</div>
<div class="a" style="left:440px;top:415px;width:86px;height:42px;border:1px solid;border-color:#e4e4e4 #777 #777 #e4e4e4"></div>
<div class="a" style="left:443px;top:419px;width:62px;height:16px;background:#b3b3b3;border:2px solid;border-color:#7a7a7a #e6e6e6 #e6e6e6 #7a7a7a"></div><div class="a" style="left:505px;top:420px;width:2px;height:14px;background:#555;border-right:1px solid #ddd"></div><div class="a" style="left:509px;top:420px;width:2px;height:14px;background:#555;border-right:1px solid #ddd"></div><div class="a" style="left:514px;top:419px;width:12px;height:16px;background:#c9c9c9;border:1px solid #777"></div><svg class="a" style="left:515px;top:420px" width="11" height="14"><path d="M3 1 V11 H10 M3 11 L0 14" fill="none" stroke="#000" stroke-width="1.4"/></svg>
<div class="a" style="left:443px;top:438px;width:62px;height:16px;background:#b3b3b3;border:2px solid;border-color:#7a7a7a #e6e6e6 #e6e6e6 #7a7a7a"></div><div class="a" style="left:505px;top:439px;width:2px;height:14px;background:#555;border-right:1px solid #ddd"></div><div class="a" style="left:509px;top:439px;width:2px;height:14px;background:#555;border-right:1px solid #ddd"></div><div class="a" style="left:514px;top:438px;width:12px;height:16px;background:#c9c9c9;border:1px solid #777"></div><svg class="a" style="left:515px;top:439px" width="11" height="14"><path d="M3 1 V11 H10 M3 11 L0 14" fill="none" stroke="#000" stroke-width="1.4"/></svg>
<div class="cframe" style="left:79px;top:459px;width:360px;height:89px;"></div>
<div class="a" style="left:127px;top:467px;width:299px;height:59px;background:#000"></div>
<div class="t" style="right:422.2px;top:461.5px;font-size:12px;font-family:'DejaVu Sans Condensed','Liberation Sans','DejaVu Sans',sans-serif;letter-spacing:-0.2px;">0.0330</div>
<div class="a" style="left:120px;top:467.0px;width:7px;height:1.5px;background:#111"></div>
<div class="t" style="right:422.2px;top:490.5px;font-size:12px;font-family:'DejaVu Sans Condensed','Liberation Sans','DejaVu Sans',sans-serif;letter-spacing:-0.2px;">0.0320</div>
<div class="a" style="left:120px;top:496.0px;width:7px;height:1.5px;background:#111"></div>
<div class="t" style="right:422.2px;top:519.5px;font-size:12px;font-family:'DejaVu Sans Condensed','Liberation Sans','DejaVu Sans',sans-serif;letter-spacing:-0.2px;">0.0310</div>
<div class="a" style="left:120px;top:525.0px;width:7px;height:1.5px;background:#111"></div>
<div class="a" style="left:127px;top:526px;width:1px;height:5px;background:#000"></div>
<div class="a" style="left:425px;top:526px;width:1px;height:5px;background:#000"></div>
<div class="t" style="left:122px;top:533.25px;font-size:11.5px;font-family:'DejaVu Sans Condensed','Liberation Sans','DejaVu Sans',sans-serif;letter-spacing:-0.08px;">11</div>
<div class="t" style="left:412px;top:533.25px;font-size:11.5px;font-family:'DejaVu Sans Condensed','Liberation Sans','DejaVu Sans',sans-serif;letter-spacing:-0.08px;">3246</div>
<svg class="a" style="left:0;top:0" width="541" height="571"><polyline points="129.4,524.7 130.2,518.6 131.0,512.6 131.8,510.7 132.6,504.0 133.4,504.9 134.2,503.9 135.0,504.3 135.8,500.5 136.6,501.3 137.4,500.3 138.2,499.2 139.0,499.0 139.8,499.0 140.6,499.0 141.4,497.7 142.2,499.2 143.0,497.4 143.8,493.3 144.6,499.0 145.4,496.8 146.2,497.0 147.0,499.0 147.8,499.5 148.6,499.9 149.4,499.2 150.2,501.3 151.0,499.4 151.8,503.6 152.6,499.4 153.4,500.5 154.2,500.4 155.0,500.3 155.8,499.2 156.6,499.9 157.4,493.7 158.2,498.1 159.0,497.6 159.8,496.8 160.6,499.2 161.4,495.2 162.2,496.1 163.0,493.0 163.8,495.8 164.6,493.6 165.4,494.2 166.2,500.3 167.0,498.5 167.8,498.0 168.6,498.7 169.4,495.8 170.2,495.7 171.0,497.1 171.8,492.9 172.6,495.6 173.4,492.5 174.2,495.8 175.0,494.8 175.8,499.6 176.6,499.3 177.4,497.9 178.2,496.5 179.0,498.2 179.8,499.4 180.6,498.3 181.4,500.2 182.2,501.4 183.0,499.9 183.8,499.1 184.6,500.6 185.4,498.9 186.2,500.3 187.0,498.4 187.8,500.9 188.6,498.0 189.4,496.7 190.2,498.1 191.0,496.9 191.8,496.4 192.6,497.5 193.4,498.6 194.2,494.4 195.0,497.3 195.8,497.0 196.6,496.9 197.4,498.2 198.2,495.1 199.0,497.6 199.8,496.1 200.6,496.3 201.4,495.6 202.2,495.1 203.0,494.6 203.8,495.6 204.6,497.8 205.4,496.7 206.2,496.8 207.0,496.8 207.8,495.7 208.6,497.7 209.4,500.2 210.2,495.8 211.0,499.2 211.8,500.1 212.6,499.6 213.4,500.9 214.2,502.3 215.0,504.0 215.8,503.2 216.6,504.3 217.4,502.9 218.2,504.2 219.0,503.7 219.8,504.1 220.6,503.3 221.4,505.2 222.2,506.6 223.0,504.5 223.8,505.3 224.6,506.0 225.4,505.3 226.2,506.8 227.0,506.0 227.8,504.1 228.6,504.3 229.4,506.6 230.2,506.3 231.0,506.8 231.8,505.4 232.6,505.2 233.4,502.7 234.2,506.9 235.0,503.6 235.8,506.4 236.6,503.3 237.4,504.0 238.2,505.1 239.0,504.3 239.8,502.6 240.6,503.5 241.4,501.8 242.2,500.1 243.0,497.8 243.8,496.0 244.6,495.4 245.4,494.2 246.2,493.8 247.0,493.8 247.8,491.1 248.6,488.8 249.4,490.4 250.2,497.1 251.0,499.5 251.8,503.2 252.6,506.8 253.4,510.9 254.2,513.4 255.0,516.9 255.8,518.4 256.6,515.3 257.4,521.1 258.2,525.0 259.0,517.9 259.8,518.3 260.6,518.0 261.4,515.3 262.2,516.1 263.0,511.4 263.8,510.4 264.6,511.9 265.4,511.6 266.2,511.6 267.0,514.4 267.8,513.0 268.6,511.1 269.4,509.1 270.2,508.6 271.0,507.6 271.8,506.3 272.6,507.7 273.4,507.1 274.2,506.3 275.0,506.7 275.8,503.8 276.6,504.8 277.4,504.3 278.2,507.0 279.0,505.9 279.8,508.3 280.6,507.6 281.4,504.9 282.2,504.0 283.0,506.3 283.8,505.3 284.6,505.6 285.4,504.5 286.2,506.9 287.0,506.5 287.8,506.9 288.6,506.9 289.4,504.8 290.2,501.7 291.0,503.3 291.8,501.6 292.6,500.9 293.4,502.6 294.2,500.7 295.0,502.5 295.8,500.8 296.6,501.9 297.4,502.0 298.2,502.8 299.0,500.3 299.8,504.0 300.6,503.0 301.4,501.9 302.2,504.3 303.0,504.1 303.8,505.5 304.6,504.9 305.4,504.5 306.2,501.8 307.0,506.6 307.8,506.4 308.6,505.2 309.4,504.6 310.2,505.5 311.0,502.4 311.8,504.4 312.6,503.2 313.4,501.6 314.2,503.3 315.0,503.1 315.8,504.8 316.6,503.5 317.4,499.7 318.2,499.0 319.0,501.4 319.8,501.0 320.6,499.8 321.4,498.8 322.2,500.4 323.0,498.8 323.8,499.2 324.6,500.9 325.4,499.7 326.2,497.9 327.0,497.0 327.8,497.9 328.6,500.2 329.4,496.6 330.2,499.7 331.0,496.4 331.8,497.5 332.6,499.1 333.4,497.3 334.2,498.7 335.0,497.0 335.8,500.1 336.6,501.0 337.4,498.8 338.2,500.2 339.0,499.6 339.8,497.0 340.6,503.6 341.4,500.4 342.2,500.4 343.0,499.5 343.8,498.9 344.6,501.7 345.4,495.5 346.2,497.7 347.0,497.6 347.8,498.0 348.6,499.3 349.4,497.4 350.2,496.6 351.0,496.9 351.8,499.2 352.6,500.0 353.4,500.0 354.2,501.8 355.0,499.5 355.8,502.4 356.6,502.7 357.4,502.2 358.2,502.1 359.0,505.1 359.8,502.7 360.6,501.4 361.4,498.6 362.2,500.6 363.0,496.9 363.8,495.8 364.6,495.8 365.4,495.4 366.2,495.4 367.0,492.5 367.8,492.8 368.6,494.7 369.4,495.1 370.2,491.8 371.0,493.0 371.8,491.6 372.6,488.8 373.4,491.2 374.2,489.7 375.0,492.0 375.8,490.1 376.6,489.9 377.4,487.8 378.2,490.0 379.0,487.0 379.8,490.0 380.6,491.6 381.4,487.9 382.2,490.7 383.0,491.4 383.8,489.1 384.6,490.9 385.4,489.7 386.2,489.1 387.0,487.3 387.8,488.8 388.6,488.5 389.4,494.2 390.2,491.5 391.0,491.1 391.8,489.7 392.6,494.2 393.4,490.2 394.2,494.0 395.0,493.5 395.8,492.1 396.6,491.2 397.4,492.1 398.2,490.3 399.0,493.2 399.8,494.7 400.6,493.6 401.4,493.9 402.2,491.4 403.0,492.8 403.8,490.8 404.6,491.6 405.4,493.2 406.2,495.6 407.0,492.1 407.8,492.0 408.6,489.2 409.4,492.1 410.2,494.6 411.0,499.6 411.8,500.5 412.6,496.7 413.4,492.5 414.2,494.0 415.0,492.7 415.8,493.1 416.6,495.1 417.4,494.2 418.2,494.1 419.0,495.1 419.8,493.1 420.6,491.1 421.4,491.1 422.2,489.8 423.0,492.2 423.8,490.8 424.6,491.8 425.4,492.0" fill="none" stroke="#fff" stroke-width="1.8" stroke-linejoin="round"/></svg>
<div class="ind" style="left:443px;top:466px;width:47px;height:17px;padding-top:1px;">0.0321</div>
<div class="a" style="left:440px;top:510px;width:86px;height:42px;border:1px solid;border-color:#e4e4e4 #777 #777 #e4e4e4"></div>
<div class="a" style="left:443px;top:514px;width:62px;height:16px;background:#b3b3b3;border:2px solid;border-color:#7a7a7a #e6e6e6 #e6e6e6 #7a7a7a"></div><div class="a" style="left:505px;top:515px;width:2px;height:14px;background:#555;border-right:1px solid #ddd"></div><div class="a" style="left:509px;top:515px;width:2px;height:14px;background:#555;border-right:1px solid #ddd"></div><div class="a" style="left:514px;top:514px;width:12px;height:16px;background:#c9c9c9;border:1px solid #777"></div><svg class="a" style="left:515px;top:515px" width="11" height="14"><path d="M3 1 V11 H10 M3 11 L0 14" fill="none" stroke="#000" stroke-width="1.4"/></svg>
<div class="a" style="left:443px;top:533px;width:62px;height:16px;background:#b3b3b3;border:2px solid;border-color:#7a7a7a #e6e6e6 #e6e6e6 #7a7a7a"></div><div class="a" style="left:505px;top:534px;width:2px;height:14px;background:#555;border-right:1px solid #ddd"></div><div class="a" style="left:509px;top:534px;width:2px;height:14px;background:#555;border-right:1px solid #ddd"></div><div class="a" style="left:514px;top:533px;width:12px;height:16px;background:#c9c9c9;border:1px solid #777"></div><svg class="a" style="left:515px;top:534px" width="11" height="14"><path d="M3 1 V11 H10 M3 11 L0 14" fill="none" stroke="#000" stroke-width="1.4"/></svg>
<div class="a" style="left:526px;top:56px;width:15px;height:507px;background:linear-gradient(90deg,#c6c6c6,#f2f2f2 30%,#fff 60%,#e6e6e6);border-left:1px solid #999"></div>
<div class="a" style="left:527px;top:61px;width:14px;height:59px;border-radius:7px 7px 0 0;border-top:1px solid #c4c4c4;background:linear-gradient(90deg,#cfcfcf,#f4f4f4 35%,#fff 60%,#e4e4e4)"></div>
<div class="a" style="left:526px;top:118px;width:13px;height:412px;border-radius:7px;background:linear-gradient(90deg,#2f55c4 0%,#5b93ec 14%,#6aa6f4 45%,#a4d4ff 56%,#b5e0ff 85%,#4a7fe0 100%);border:1px solid #2c55b4"></div>
<svg class="a" style="left:526px;top:530px" width="14" height="32"><path d="M7 3.5 L10.5 10 L3.5 10Z M7 26.5 L10.5 20 L3.5 20Z" fill="#666"/><rect x="0" y="15" width="14" height="1" fill="#bbb"/></svg>
<div class="a" style="left:0px;top:562px;width:541px;height:16px;background:linear-gradient(180deg,#c6c6c6,#f2f2f2 30%,#fff 60%,#e6e6e6);border-top:1px solid #999"></div>
<div class="a" style="left:5px;top:563px;width:431px;height:15px;border-radius:8px;background:linear-gradient(180deg,#2f55c4 0%,#5b93ec 14%,#6aa6f4 45%,#a4d4ff 56%,#b5e0ff 85%,#4a7fe0 100%);border:1px solid #2c55b4"></div>
<div class="a" style="left:440px;top:563px;width:52px;height:15px;border-radius:0 8px 8px 0;border-right:1px solid #a6a6a6"></div>
<svg class="a" style="left:494px;top:564px" width="32" height="8"><path d="M12 0 L12 8 L4 4Z M21 0 L21 8 L29 4Z" fill="#555"/><rect x="15.5" y="0" width="1" height="8" fill="#aaa"/></svg>
<div class="a" style="left:526px;top:562px;width:15px;height:16px;background:#fff;border-left:1px solid #aaa;border-top:1px solid #aaa"></div>
<svg class="a" style="left:528px;top:564px" width="12" height="8"><path d="M2 8 L12 0" stroke="#999" stroke-width="1"/></svg>
</div></div>
<div id="menubar" class="a">
<div class="t" style="left:895px;top:3.5px;font-size:14px;font-family:'DejaVu Sans Condensed','Liberation Sans','DejaVu Sans',sans-serif;letter-spacing:0.46px;">May 14  21:25:22</div>
<svg class="a" style="left:774px;top:2px" width="18" height="18" viewBox="0 0 18 18"><path d="M3.4 5.5 A6.3 6.3 0 1 1 2.8 10.5" fill="none" stroke="#8f8996" stroke-width="1.3"/><path d="M0.8 7.6 L4.8 7.8 L2.8 11Z" fill="#8f8996"/><path d="M9 5.2 V9.3 L11.6 10.6" fill="none" stroke="#8f8996" stroke-width="1.2"/></svg>
<svg class="a" style="left:804px;top:2px" width="18" height="18" viewBox="-9 -9 18 18"><path d="M0 -5.5 L1.4 -1.4 L4 0 L1.4 1.4 L0 5.5 L-1.4 1.4 L-4 0 L-1.4 -1.4Z" fill="#3d3842"/><circle cx="-6" cy="0" r="1.1" fill="#3d3842"/><circle cx="6" cy="0" r="1.1" fill="#3d3842"/><path d="M0 -7 V7" stroke="#9a94a0" stroke-width=".7"/></svg>
<svg class="a" style="left:832px;top:3px" width="24" height="17" viewBox="0 0 24 17"><path d="M1.5 6.5 Q12 -3 22.5 6.5 L12 15.5 Z" fill="rgba(255,255,255,.35)" stroke="#9a92a0" stroke-width="1.2" stroke-linejoin="round"/></svg>
<svg class="a" style="left:862px;top:3px" width="20" height="16" viewBox="0 0 20 16"><path d="M1 5.5 H4.5 L9 1.5 V14.5 L4.5 10.5 H1 Z" fill="#2e2a33"/><path d="M11.5 5 Q13.5 8 11.5 11 M14 3 Q17.5 8 14 13" fill="none" stroke="#2e2a33" stroke-width="1.5" stroke-linecap="round"/></svg>
</div>
</body></html>
